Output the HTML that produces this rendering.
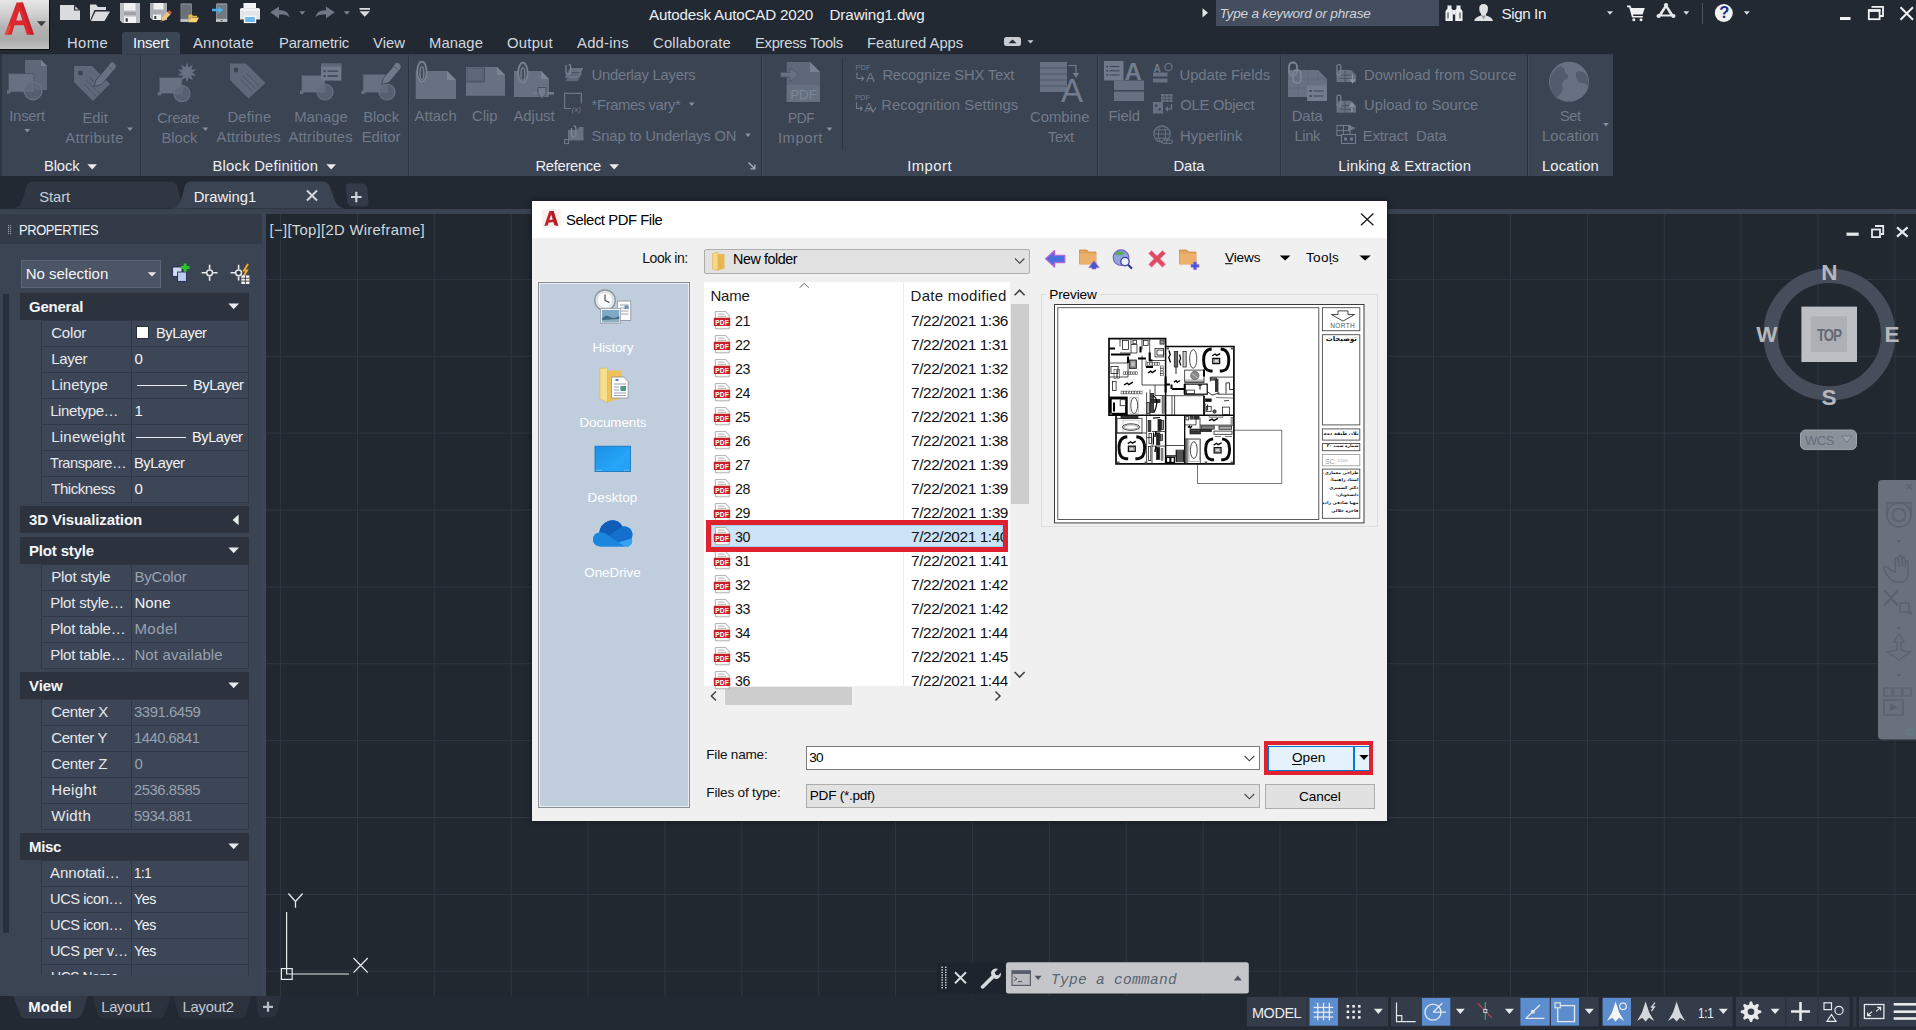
<!DOCTYPE html>
<html lang="en">
<head>
<meta charset="utf-8">
<title>Autodesk AutoCAD 2020 - Drawing1.dwg</title>
<style>
*{box-sizing:border-box;margin:0;padding:0}
html,body{width:1916px;height:1030px;overflow:hidden;background:#222933}
body{position:relative;font-family:"Liberation Sans","DejaVu Sans",sans-serif;font-size:15px;color:#e6e8eb;-webkit-font-smoothing:antialiased}
.abs{position:absolute}
.t{position:absolute;white-space:nowrap;line-height:1}
svg{position:absolute;overflow:visible}
/* ---------- title / menu ---------- */
#appbtn{left:0;top:0;width:50px;height:50px;background:linear-gradient(180deg,#e6e6e6 0%,#cfcfcf 30%,#b4b4b4 55%,#aaaaaa 80%,#c2c2c2 100%);border-right:1.6px solid #0c0e12;border-bottom:1.6px solid #0c0e12}
#title{left:649px;top:7px;font-size:15px;color:#e8eaed}
#search{left:1216px;top:0;width:223px;height:26px;background:#454e5f}
#search .t{left:5px;top:5px;font-style:italic;font-size:14px;color:#d5d9df}
.menu{top:35px;font-size:15.2px;color:#dfe3e8}
#tabInsert{left:122px;top:32px;width:58px;height:23px;background:#3b4453;border-radius:3px 3px 0 0}
/* ---------- ribbon ---------- */
#ribbon{left:0;top:54px;width:1613px;height:122px;background:#3b4453}
.sep{position:absolute;top:54px;width:2px;height:122px;background:#2c3440}
.rl{font-size:15.2px;color:#6d7787}
.rs{font-size:15.2px;color:#687283}
.pt{font-size:15.2px;color:#e8ebef;top:158px}
/* ---------- file tabs ---------- */
#filetabs{left:0;top:176px;width:1916px;height:36px;background:#222933}
/* ---------- props ---------- */
#props{left:0;top:212px;width:266px;height:784px;background:#3b4453}
#propsHead{left:0;top:214px;width:263px;height:30px;background:#323a47}
.sec{position:absolute;left:20px;width:229px;height:27px;background:#2a313c}
.sec .t{left:9px;top:6px;font-weight:bold;font-size:14.6px;color:#f2f4f6}
.sec i{position:absolute;right:9px;top:11px;border:5.5px solid transparent;border-top:6px solid #e6e8eb;border-bottom:0}
.sec i.l{top:8px;right:11px;border:5.5px solid transparent;border-right:6px solid #e6e8eb;border-left:0}
.row{position:absolute;left:42px;width:207px;height:26px;background:#3f4858;border-top:1px solid #333b48;border-left:1px solid #333b48}
.row b{position:absolute;left:89px;top:0;width:1px;height:25px;background:#333b48}
.row .k{left:8px;top:5px;font-size:15px;font-weight:normal;color:#e3e6ea}
.row .v{left:92px;top:5px;font-size:15px;color:#eef0f3}
.row .v.d{color:#97a0ae}
/* ---------- canvas ---------- */
#canvas{left:266px;top:214px;width:1650px;height:782px;background:#212830;overflow:hidden}
/* ---------- dialog ---------- */
#dlg{left:531px;top:200px;width:857px;height:622px;background:#f0f0f0;color:#000;border:1px solid #1b2029;box-shadow:0 0 6px rgba(0,0,0,.35)}
#dlgTitle{left:0;top:0;width:855px;height:37px;background:#fff}
.d{color:#111;font-size:14.6px}
.fr{position:absolute;left:0;width:300px;height:24px}
.fr .n{left:29px;top:5px;font-size:15px;color:#111}
.fr .dt{left:205px;top:5px;font-size:15px;color:#111}
/* ---------- bottom ---------- */
#bottom{left:0;top:996px;width:1916px;height:34px;background:#222933}
</style>
</head>
<body>
<!-- TITLEBAR -->
<div id="appbtn" class="abs"></div>
<div id="search" class="abs"></div>
<div class="t" style="left:649.0px;top:7px;font-size:15.2px;letter-spacing:-0.19px;color:#eceef1;">Autodesk AutoCAD 2020</div>
<div class="t" style="left:829.5px;top:7px;font-size:15.2px;letter-spacing:-0.10px;color:#eceef1;">Drawing1.dwg</div>
<div class="t" style="left:1501.5px;top:6px;font-size:15.2px;letter-spacing:-0.41px;color:#eef0f3;">Sign In</div>
<div class="t" style="left:1219.5px;top:7px;font-size:13.6px;letter-spacing:-0.21px;color:#cfd4dc;font-style:italic;">Type a keyword or phrase</div>
<svg style="left:0;top:0" width="51" height="51" viewBox="0 0 51 51">
 <path d="M4.7 34.8 L16.6 2.5 L22.9 2.5 L34.1 34.8 L26.9 34.8 L23.8 25.2 L14.6 25.2 L11.6 34.8 Z M16.2 20.6 L22.4 20.6 L19.3 10.8 Z" fill="#da2a2e" fill-rule="evenodd"/>
 <path d="M19.8 2.5 L22.9 2.5 L34.1 34.8 L30.4 34.8 Z" fill="#b51c22" opacity=".5"/>
 <path d="M4.7 34.8 L8.6 24.2 L11 27 L8 34.8 Z" fill="#e8553f" opacity=".7"/>
 <path d="M36.9 21.3 L46 21.3 L41.45 26.2 Z" fill="#3a3d42"/>
</svg>
<svg style="left:56px;top:0" width="320" height="28" viewBox="56 0 320 28">
 <!-- new -->
 <path d="M60 5 L74 5 L80 10.5 L80 20 L60 20 Z" fill="#d9dbde"/><path d="M74 5 L74 10.5 L80 10.5 Z" fill="#222933"/><path d="M75.2 6.6 L75.2 9.6 L78.6 9.6 Z" fill="#d9dbde"/>
 <!-- open -->
 <path d="M90 20.5 L90 4.5 L96 4.5 L98 7 L106 7 L106 10 L94.5 10 L90 20.5 Z" fill="#d9dbde"/><path d="M95.5 11.5 L110 11.5 L104.5 21 L90.8 21 Z" fill="#d9dbde"/>
 <!-- save -->
 <path d="M120 3 L140 3 L140 23 L122.5 23 L120 20.5 Z" fill="#b9bcc1"/><rect x="124" y="3" width="11.5" height="7.5" fill="#f0f1f2"/><rect x="124" y="16.5" width="12" height="6.5" fill="#f0f1f2"/><rect x="125.6" y="18.2" width="2.2" height="3.6" fill="#3a4049"/><rect x="124" y="12" width="12" height="3" fill="#9fa3a9"/>
 <!-- saveas -->
 <path d="M150 3 L167 3 L167 20 L152.5 20 L150 17.5 Z" fill="#a9adb3"/><rect x="153.5" y="3" width="10" height="6.5" fill="#eeeff0"/><rect x="153" y="14.5" width="8" height="5.5" fill="#eeeff0"/><rect x="154.3" y="16" width="2" height="3" fill="#3a4049"/>
 <path d="M160.5 21.8 L162 17.2 L167.5 11.8 L170.4 14.6 L165 20.2 Z" fill="#e8c87e"/><path d="M167.5 11.8 L168.6 10.8 Q169.6 10.2 170.6 11.2 L171.4 12 Q172 13 171.2 13.8 L170.4 14.6 Z" fill="#d9534a"/><path d="M160.5 21.8 L161.2 19.6 L162.8 21.1 Z" fill="#4a4034"/>
 <!-- open mobile -->
 <rect x="180.5" y="3.2" width="11.5" height="18.6" rx="1.2" fill="#7d828a"/><rect x="181.5" y="5" width="9.5" height="13.5" fill="#6b7078"/><rect x="180.5" y="19.3" width="11.5" height="2.5" fill="#c5c8cc"/>
 <path d="M188.5 22 L188.5 14.5 L192 14.5 L193 15.8 L197 15.8 L197 17.2 L191 17.2 Z" fill="#e9b84a"/><path d="M191.2 17.6 L199 17.6 L196.5 22.2 L188.7 22.2 Z" fill="#f6d26f"/>
 <!-- save mobile -->
 <rect x="216" y="3.2" width="11.3" height="18.6" rx="1.2" fill="#8b9098"/><rect x="217" y="5" width="9.3" height="13.5" fill="#727780"/><rect x="216" y="19.3" width="11.3" height="2.5" fill="#c5c8cc"/><rect x="220.6" y="20.2" width="2" height="0.9" fill="#444"/>
 <path d="M212 8.8 L218.5 8.8 L218.5 6.2 L223.2 10 L218.5 13.8 L218.5 11.2 L212 11.2 Z" fill="#49aee8"/>
 <!-- print -->
 <rect x="243.5" y="3" width="12.5" height="6" fill="#f3f4f5"/><path d="M241.5 8 L258.5 8 Q260 8 260 9.5 L260 19.5 L240 19.5 L240 9.5 Q240 8 241.5 8 Z" fill="#e3e5e7"/><rect x="243.8" y="15.5" width="12.4" height="7.6" fill="#f3f4f5"/><rect x="245.2" y="17" width="9.6" height="5" fill="#6db9ee"/><rect x="240" y="9.3" width="20" height="1.4" fill="#f7f7f8"/>
 <!-- undo -->
 <path d="M270.3 12.2 L279 6.6 L279 10.2 Q288 9.5 289.8 17.5 Q286.5 13.6 279 14.6 L279 18.4 Z" fill="#6f7783"/>
 <path d="M299.3 11.2 L305.3 11.2 L302.3 14.8 Z" fill="#7c8490"/>
 <!-- redo -->
 <path d="M334.7 12.2 L326 6.6 L326 10.2 Q317 9.5 315.2 17.5 Q318.5 13.6 326 14.6 L326 18.4 Z" fill="#6f7783"/>
 <path d="M343.8 11.2 L349.8 11.2 L346.8 14.8 Z" fill="#7c8490"/>
 <!-- customize -->
 <rect x="359.5" y="8" width="10.5" height="1.8" fill="#d9dbde"/><path d="M359.5 11.3 L370 11.3 L364.75 16.8 Z" fill="#d9dbde"/>
</svg>
<svg style="left:1200px;top:0" width="716" height="28" viewBox="1200 0 716 28">
 <path d="M1202.5 8.2 L1208 12.8 L1202.5 17.4 Z" fill="#e4e6e9"/>
 <!-- binoculars -->
 <path d="M1445.5 21 L1445.5 11 L1447.5 8.5 L1447.5 5.5 L1451.5 5.5 L1451.5 8.5 L1452.8 10 L1452.8 21 Z M1455.2 21 L1455.2 10 L1456.5 8.5 L1456.5 5.5 L1460.5 5.5 L1460.5 8.5 L1462.5 11 L1462.5 21 Z" fill="#eef0f2"/><rect x="1452.5" y="10" width="3" height="4.5" fill="#eef0f2"/><rect x="1447" y="12.5" width="2" height="6" fill="#8a8f97"/><rect x="1459" y="12.5" width="2" height="6" fill="#8a8f97"/>
 <!-- user -->
 <path d="M1479.2 8.5 Q1479.2 4 1483.6 4 Q1488 4 1488 8.5 Q1488 12 1486 14 L1486 15.5 Q1492.5 17 1493 21 L1474.2 21 Q1474.7 17 1481.2 15.5 L1481.2 14 Q1479.2 12 1479.2 8.5 Z" fill="#dfe1e4"/><path d="M1481.2 15.5 L1483.6 19.5 L1486 15.5 Z" fill="#9a9ea6"/>
 <path d="M1607 11.3 L1613 11.3 L1610 14.7 Z" fill="#d9dbde"/>
 <!-- cart -->
 <path d="M1627 5.6 L1630.4 5.6 L1631.4 8 L1644.8 8 L1642.6 14.6 L1633 14.6 L1633.4 16 L1642.8 16 L1642.8 17.6 L1632 17.6 L1629.2 7.2 L1627 7.2 Z" fill="#eef0f2"/><circle cx="1633.8" cy="19.8" r="1.5" fill="#eef0f2"/><circle cx="1641" cy="19.8" r="1.5" fill="#eef0f2"/>
 <!-- a360 -->
 <path d="M1666 3.6 L1674.6 16.6 L1657.4 16.6 Z M1666 8 L1662 14.4 L1670 14.4 Z" fill="#e6e8eb" fill-rule="evenodd"/><circle cx="1666" cy="5" r="2.1" fill="#e6e8eb"/><circle cx="1658.6" cy="16" r="2.1" fill="#e6e8eb"/><circle cx="1673.4" cy="16" r="2.1" fill="#e6e8eb"/>
 <path d="M1683.3 11.3 L1689.3 11.3 L1686.3 14.7 Z" fill="#d9dbde"/>
 <rect x="1702" y="3" width="1" height="21" fill="#4a5362"/>
 <!-- help -->
 <circle cx="1723.8" cy="13" r="9" fill="#f2f3f5"/>
 <path d="M1743.8 11.3 L1749.8 11.3 L1746.8 14.7 Z" fill="#d9dbde"/>
 <!-- window controls -->
 <rect x="1840" y="17" width="10.5" height="3" fill="#f0f1f3"/>
 <path d="M1871.5 6.8 L1883 6.8 L1883 16 L1880 16" fill="none" stroke="#f0f1f3" stroke-width="1.8"/><rect x="1868.8" y="10.2" width="10.8" height="9" fill="none" stroke="#f0f1f3" stroke-width="1.8"/><rect x="1868" y="9.3" width="12.4" height="2.6" fill="#f0f1f3"/>
 <path d="M1900.5 7.2 L1913 19.8 M1913 7.2 L1900.5 19.8" stroke="#f0f1f3" stroke-width="2" fill="none"/>
</svg>
<div class="t" style="left:1719.3px;top:3.6px;font-size:16.5px;font-weight:bold;color:#1b2f8f">?</div>

<!-- MENU -->
<div id="tabInsert" class="abs"></div>
<div class="t" style="left:67.0px;top:36px;font-size:14.8px;letter-spacing:0.38px;color:#d3d7dd;">Home</div>
<div class="t" style="left:133.0px;top:36px;font-size:14.8px;letter-spacing:-0.17px;color:#f2f4f7;">Insert</div>
<div class="t" style="left:193.0px;top:36px;font-size:14.8px;letter-spacing:0.22px;color:#d3d7dd;">Annotate</div>
<div class="t" style="left:279.0px;top:36px;font-size:14.8px;letter-spacing:-0.15px;color:#d3d7dd;">Parametric</div>
<div class="t" style="left:373.0px;top:36px;font-size:14.8px;letter-spacing:0.05px;color:#d3d7dd;">View</div>
<div class="t" style="left:429.0px;top:36px;font-size:14.8px;letter-spacing:0.09px;color:#d3d7dd;">Manage</div>
<div class="t" style="left:507.0px;top:36px;font-size:14.8px;letter-spacing:0.26px;color:#d3d7dd;">Output</div>
<div class="t" style="left:577.0px;top:36px;font-size:14.8px;letter-spacing:0.26px;color:#d3d7dd;">Add-ins</div>
<div class="t" style="left:653.0px;top:36px;font-size:14.8px;letter-spacing:0.21px;color:#d3d7dd;">Collaborate</div>
<div class="t" style="left:755.0px;top:36px;font-size:14.8px;letter-spacing:-0.30px;color:#d3d7dd;">Express Tools</div>
<div class="t" style="left:867.0px;top:36px;font-size:14.8px;color:#d3d7dd;">Featured Apps</div>
<svg style="left:1004px;top:37px" width="30" height="10" viewBox="0 0 30 10"><rect x="0" y="0" width="17" height="9" rx="2.5" fill="#c9cdd3"/><path d="M4.5 6.3 L8.5 2.6 L12.5 6.3 Z" fill="#222933"/><path d="M23.5 3.2 L29.5 3.2 L26.5 6.4 Z" fill="#c9cdd3"/></svg>

<!-- RIBBON -->
<div id="ribbon" class="abs"></div>
<div class="t" style="left:9.2px;top:109px;font-size:14.8px;letter-spacing:-0.20px;color:#717a89;">Insert</div>
<div class="t" style="left:82.4px;top:111px;font-size:14.8px;color:#717a89;">Edit</div>
<div class="t" style="left:65.3px;top:131px;font-size:14.8px;letter-spacing:0.37px;color:#717a89;">Attribute</div>
<div class="t" style="left:157.3px;top:111px;font-size:14.8px;letter-spacing:-0.39px;color:#717a89;">Create</div>
<div class="t" style="left:161.6px;top:131px;font-size:14.8px;letter-spacing:-0.10px;color:#717a89;">Block</div>
<div class="t" style="left:227.5px;top:110px;font-size:14.8px;letter-spacing:0.17px;color:#717a89;">Define</div>
<div class="t" style="left:216.6px;top:130px;font-size:14.8px;letter-spacing:0.17px;color:#717a89;">Attributes</div>
<div class="t" style="left:294.2px;top:110px;font-size:14.8px;color:#717a89;">Manage</div>
<div class="t" style="left:288.5px;top:130px;font-size:14.8px;letter-spacing:0.17px;color:#717a89;">Attributes</div>
<div class="t" style="left:363.2px;top:110px;font-size:14.8px;letter-spacing:-0.08px;color:#717a89;">Block</div>
<div class="t" style="left:361.7px;top:130px;font-size:14.8px;letter-spacing:0.04px;color:#717a89;">Editor</div>
<div class="t" style="left:414.6px;top:109px;font-size:14.8px;letter-spacing:0.04px;color:#717a89;">Attach</div>
<div class="t" style="left:472.0px;top:109px;font-size:14.8px;color:#717a89;">Clip</div>
<div class="t" style="left:513.5px;top:109px;font-size:14.8px;color:#717a89;">Adjust</div>
<div class="t" style="left:787.8px;top:111px;font-size:14.8px;letter-spacing:-0.45px;transform:scaleX(0.9271);transform-origin:0 0;color:#717a89;">PDF</div>
<div class="t" style="left:778.0px;top:131px;font-size:14.8px;letter-spacing:0.51px;color:#717a89;">Import</div>
<div class="t" style="left:1030.0px;top:110px;font-size:14.8px;letter-spacing:0.04px;color:#717a89;">Combine</div>
<div class="t" style="left:1047.8px;top:130px;font-size:14.8px;letter-spacing:-0.24px;color:#717a89;">Text</div>
<div class="t" style="left:1108.4px;top:109px;font-size:14.8px;letter-spacing:-0.14px;color:#717a89;">Field</div>
<div class="t" style="left:1291.8px;top:109px;font-size:14.8px;letter-spacing:-0.12px;color:#717a89;">Data</div>
<div class="t" style="left:1294.4px;top:129px;font-size:14.8px;letter-spacing:-0.39px;color:#717a89;">Link</div>
<div class="t" style="left:1560.0px;top:109px;font-size:14.8px;letter-spacing:-0.45px;transform:scaleX(0.9871);transform-origin:0 0;color:#717a89;">Set</div>
<div class="t" style="left:1542.0px;top:129px;font-size:14.8px;letter-spacing:0.13px;color:#717a89;">Location</div>
<div class="t" style="left:591.6px;top:68px;font-size:14.8px;letter-spacing:-0.26px;color:#717a89;white-space:pre;">Underlay Layers</div>
<div class="t" style="left:591.6px;top:98px;font-size:14.8px;letter-spacing:-0.38px;color:#717a89;white-space:pre;">*Frames vary*</div>
<div class="t" style="left:591.6px;top:129px;font-size:14.8px;letter-spacing:-0.17px;color:#717a89;white-space:pre;">Snap to Underlays ON</div>
<div class="t" style="left:882.4px;top:68px;font-size:14.8px;letter-spacing:-0.21px;color:#717a89;white-space:pre;">Recognize SHX Text</div>
<div class="t" style="left:881.3px;top:98px;font-size:14.8px;letter-spacing:0.06px;color:#717a89;white-space:pre;">Recognition Settings</div>
<div class="t" style="left:1179.5px;top:68px;font-size:14.8px;letter-spacing:-0.06px;color:#717a89;white-space:pre;">Update Fields</div>
<div class="t" style="left:1180.3px;top:98px;font-size:14.8px;letter-spacing:-0.25px;color:#717a89;white-space:pre;">OLE Object</div>
<div class="t" style="left:1180.0px;top:129px;font-size:14.8px;letter-spacing:0.08px;color:#717a89;white-space:pre;">Hyperlink</div>
<div class="t" style="left:1364.0px;top:68px;font-size:14.8px;letter-spacing:0.10px;color:#717a89;white-space:pre;">Download from Source</div>
<div class="t" style="left:1364.0px;top:98px;font-size:14.8px;color:#717a89;white-space:pre;">Upload to Source</div>
<div class="t" style="left:1362.8px;top:129px;font-size:14.8px;letter-spacing:-0.13px;color:#717a89;white-space:pre;">Extract  Data</div>
<div class="t" style="left:43.9px;top:159px;font-size:14.8px;letter-spacing:-0.10px;color:#eef0f3;">Block</div>
<div class="t" style="left:212.5px;top:159px;font-size:14.8px;letter-spacing:0.23px;color:#eef0f3;">Block Definition</div>
<div class="t" style="left:535.5px;top:159px;font-size:14.8px;letter-spacing:-0.33px;color:#eef0f3;">Reference</div>
<div class="t" style="left:907.2px;top:159px;font-size:14.8px;letter-spacing:0.48px;color:#eef0f3;">Import</div>
<div class="t" style="left:1173.5px;top:159px;font-size:14.8px;letter-spacing:-0.07px;color:#eef0f3;">Data</div>
<div class="t" style="left:1338.2px;top:159px;font-size:14.8px;letter-spacing:0.10px;color:#eef0f3;">Linking &amp; Extraction</div>
<div class="t" style="left:1542.0px;top:159px;font-size:14.8px;letter-spacing:0.13px;color:#eef0f3;">Location</div><div class="abs" style="left:140px;top:54px;width:1px;height:122px;background:#2b323d"></div><div class="abs" style="left:141px;top:54px;width:1px;height:122px;background:#424b5b"></div><div class="abs" style="left:408px;top:54px;width:1px;height:122px;background:#2b323d"></div><div class="abs" style="left:409px;top:54px;width:1px;height:122px;background:#424b5b"></div><div class="abs" style="left:761px;top:54px;width:1px;height:122px;background:#2b323d"></div><div class="abs" style="left:762px;top:54px;width:1px;height:122px;background:#424b5b"></div><div class="abs" style="left:1097px;top:54px;width:1px;height:122px;background:#2b323d"></div><div class="abs" style="left:1098px;top:54px;width:1px;height:122px;background:#424b5b"></div><div class="abs" style="left:1280px;top:54px;width:1px;height:122px;background:#2b323d"></div><div class="abs" style="left:1281px;top:54px;width:1px;height:122px;background:#424b5b"></div><div class="abs" style="left:1527px;top:54px;width:1px;height:122px;background:#2b323d"></div><div class="abs" style="left:1528px;top:54px;width:1px;height:122px;background:#424b5b"></div><div class="abs" style="left:842px;top:58px;width:1px;height:92px;background:#2d3440"></div><div class="abs" style="left:0;top:54px;width:1613px;height:1px;background:#363e4c"></div><div class="abs" style="left:0;top:54px;width:2px;height:122px;background:#2e3543"></div><svg style="left:0;top:54px" width="1613" height="122" viewBox="0 54 1613 122"><path d="M87.4 164.2 L97.0 164.2 L92.2 169.6 Z" fill="#e9ebee"/><path d="M326.4 164.2 L336.0 164.2 L331.2 169.6 Z" fill="#e9ebee"/><path d="M609.4000000000001 164.2 L619.0 164.2 L614.2 169.6 Z" fill="#e9ebee"/><path d="M24.4 129 L30.0 129 L27.2 132.4 Z" fill="#8790a0"/><path d="M127.2 127.5 L132.8 127.5 L130 130.9 Z" fill="#8790a0"/><path d="M202.6 127.5 L208.20000000000002 127.5 L205.4 130.9 Z" fill="#8790a0"/><path d="M826.7 127.5 L832.3 127.5 L829.5 130.9 Z" fill="#8790a0"/><path d="M689.0 102.6 L694.5999999999999 102.6 L691.8 106.0 Z" fill="#8790a0"/><path d="M745.2 133.6 L750.8 133.6 L748 137.0 Z" fill="#8790a0"/><path d="M1603.2 123 L1608.8 123 L1606 126.4 Z" fill="#8790a0"/><path d="M748.5 162.5 L754.5 168.5 M750.5 168.8 L754.8 168.8 L754.8 164.5" stroke="#aab1bd" stroke-width="1.3" fill="none"/><path d="M25 60 L41 60 L47 66 L47 90 L25 90 Z" fill="#5f6878"/><path d="M41 60 L41 66 L47 66 Z" fill="#78818f"/><rect x="8.5" y="73.7" width="25.5" height="18.3" fill="#687181" stroke="#4a5363" stroke-width="0.8"/><circle cx="33" cy="90.8" r="9" fill="#5f6878" fill-opacity=".75" stroke="#687181" stroke-width="1.2"/><path d="M33 81.8 L33 90.8 L24 90.8" stroke="#687181" stroke-width="1" fill="none"/><rect x="7" y="90.2" width="3.4" height="3.4" fill="#687181"/><path d="M74 66 L92 66 L110 84 L93 101 L74 82 Z" fill="#5f6878"/><circle cx="80.5" cy="73" r="2.4" fill="#3b4453"/><path d="M86 80 L100 94 M83.5 83.5 L96.5 96.5 M89 77 L94 82" stroke="#4a5363" stroke-width="0.9"/><path d="M96 80 L108 66 L113.5 70.5 L101.5 84.5 L94 86.5 Z" fill="#687181" stroke="#3b4453" stroke-width="0.8"/><path d="M108 66 L110.5 63 Q112.5 61.5 114.5 63.5 Q116.5 65.5 115.5 67.5 L113.5 70.5 Z" fill="#687181"/><rect x="159.4" y="77.5" width="22.6" height="16.1" fill="#687181" stroke="#4a5363" stroke-width="0.8"/><circle cx="182" cy="93.6" r="8" fill="#5f6878" fill-opacity=".8" stroke="#687181" stroke-width="1.2"/><path d="M182 85.6 L182 93.6 L174 93.6" stroke="#687181" stroke-width="1" fill="none"/><rect x="157.8" y="92" width="3.4" height="3.4" fill="#687181"/><polygon points="187.0,62.5 188.6,67.6 192.9,64.4 191.2,69.4 196.5,69.4 192.2,72.5 196.5,75.6 191.2,75.6 192.9,80.6 188.6,77.4 187.0,82.5 185.4,77.4 181.1,80.6 182.8,75.6 177.5,75.6 181.8,72.5 177.5,69.4 182.8,69.4 181.1,64.4 185.4,67.6" fill="#687181"/><path d="M230 63.6 L246 63.6 L265.5 83 L248.5 98.5 L230 80 Z" fill="#5f6878"/><circle cx="236" cy="70" r="2.4" fill="#3b4453"/><path d="M243 76 L256 89 M240.5 79.5 L252.5 91.5 M246 73 L259 86" stroke="#4a5363" stroke-width="0.9"/><rect x="301.7" y="75.4" width="23.3" height="17" fill="#687181" stroke="#4a5363" stroke-width="0.8"/><circle cx="325" cy="92" r="8" fill="#5f6878" fill-opacity=".8" stroke="#687181" stroke-width="1.2"/><path d="M325 84 L325 92 L317 92" stroke="#687181" stroke-width="1" fill="none"/><rect x="300" y="90.6" width="3.4" height="3.4" fill="#687181"/><rect x="321" y="63.6" width="20.4" height="17" fill="#707a8a"/><rect x="321" y="63.6" width="20.4" height="3" fill="#5f6878"/><path d="M327.5 71.2 L338 71.2 M327.5 76 L338 76" stroke="#3b4453" stroke-width="1.3"/><rect x="323.6" y="70.2" width="2" height="2" fill="#3b4453"/><rect x="323.6" y="75" width="2" height="2" fill="#3b4453"/><rect x="363" y="74.3" width="24" height="18.2" fill="#687181" stroke="#4a5363" stroke-width="0.8"/><circle cx="387" cy="92" r="8" fill="#5f6878" fill-opacity=".8" stroke="#687181" stroke-width="1.2"/><path d="M387 84 L387 92 L379 92" stroke="#687181" stroke-width="1" fill="none"/><rect x="361.4" y="90.6" width="3.4" height="3.4" fill="#687181"/><path d="M383.5 78 L393.5 66 L399 70.5 L389 82.5 L381.5 84.5 Z" fill="#6f7989" stroke="#3b4453" stroke-width="0.8"/><path d="M393.5 66 L395.5 63.5 Q397.5 62 399.5 64 Q401.5 66 400.5 68 L399 70.5 Z" fill="#6f7989"/><path d="M415.7 71 L447 71 L456 80 L456 99 L415.7 99 Z" fill="#687181"/><path d="M447 71 L447 80 L456 80 Z" fill="#7b8492"/><ellipse cx="421.9" cy="71.6" rx="4.7" ry="10" fill="#444d5c" stroke="#7a8392" stroke-width="1.7"/><ellipse cx="421.9" cy="73.19999999999999" rx="1.9" ry="6.4" fill="none" stroke="#7a8392" stroke-width="1.3"/><path d="M466 67 L497 67 L505 75 L505 95.7 L466 95.7 Z" fill="#687181"/><path d="M497 67 L497 75 L505 75 Z" fill="#7b8492"/><rect x="467" y="68" width="16" height="13" fill="#5f6878" stroke="#4a5363" stroke-width="0.8"/><path d="M465 82 L484.5 82 L484.5 66" stroke="#4a5363" stroke-width="1" fill="none"/><path d="M514 71 L541 71 L549 79 L549 97 L514 97 Z" fill="#687181"/><path d="M541 71 L541 79 L549 79 Z" fill="#7b8492"/><ellipse cx="522.9" cy="72.6" rx="4.7" ry="10" fill="#444d5c" stroke="#7a8392" stroke-width="1.7"/><ellipse cx="522.9" cy="74.19999999999999" rx="1.9" ry="6.4" fill="none" stroke="#7a8392" stroke-width="1.3"/><rect x="533" y="92" width="21" height="2.6" fill="#727c8c"/><path d="M538 87.5 L546 87.5 L546 94 L542 98.5 L538 94 Z" fill="#727c8c" stroke="#3b4453" stroke-width="0.7"/><path d="M570 68 L582.6 68 L578 77 L565 77 Z" fill="#687181"/><path d="M570 72.5 L582.6 72.5 L578 81.5 L565 81.5 Z" fill="#5f6878" stroke="#3b4453" stroke-width="0.6"/><path d="M565 77 L578 77 L582.6 68" stroke="#7a8494" stroke-width="0.9" fill="none"/><path d="M566 65 L566 72 Q566 74.5 568.3 74.5 Q570.6 74.5 570.6 72 L570.6 66.5 Q570.6 64.5 568.8 64.5" stroke="#7a8494" stroke-width="1.3" fill="none"/><path d="M571 108.5 L564.6 108.5 L564.6 93.4 L581.4 93.4 L581.4 103.5" stroke="#6d7787" stroke-width="1.2" fill="none"/><path d="M568 130 L583.5 130 L583.5 140.5 L568 140.5 Z" fill="#687181"/><path d="M577 130 L583.5 130 L583.5 127 L579.5 127 Z" fill="#687181"/><rect x="564.6" y="139.6" width="4" height="4" fill="#3b4453" stroke="#727c8c" stroke-width="1"/><path d="M571.5 128 L571.5 134.5 Q571.5 137 573.7 137 Q575.9 137 575.9 134.5 L575.9 128.5 Q575.9 126 573.9 126" stroke="#7a8494" stroke-width="1.3" fill="none"/><path d="M786.7 62 L810 62 L820 72 L820 102 L786.7 102 Z" fill="#5f6878"/><path d="M810 62 L810 72 L820 72 Z" fill="#78818f"/><rect x="786.7" y="85" width="33.3" height="17" fill="#66707f"/><path d="M780.5 72.5 L790 72.5 L790 68 L799 74.8 L790 81.5 L790 77 L780.5 77 Z" fill="#687181" stroke="#4a5363" stroke-width="0.7"/><rect x="1040" y="62" width="27" height="30" fill="#687181"/><path d="M1040 68 L1067 68 M1040 74 L1067 74 M1040 80 L1067 80 M1040 86 L1067 86" stroke="#4a5363" stroke-width="0.8"/><path d="M1068.5 65.5 L1076 65.5 L1076 73" stroke="#727c8c" stroke-width="1.2" fill="none"/><path d="M1072.8 73 L1079.2 73 L1076 78 Z" fill="#727c8c"/><rect x="1104" y="61" width="19.5" height="19.5" fill="#707a8a"/><path d="M1109.5 66.5 L1119.5 66.5 M1109.5 70.8 L1119.5 70.8 M1109.5 75 L1119.5 75" stroke="#3b4453" stroke-width="1"/><rect x="1106.4" y="65.8" width="1.6" height="1.6" fill="#3b4453"/><rect x="1106.4" y="70" width="1.6" height="1.6" fill="#3b4453"/><rect x="1106.4" y="74.2" width="1.6" height="1.6" fill="#3b4453"/><rect x="1114" y="80.5" width="30" height="9.5" fill="#687181"/><rect x="1114" y="91.5" width="30" height="9.5" fill="#687181"/><rect x="1153" y="72.5" width="14.5" height="4" fill="#687181"/><rect x="1153" y="78.5" width="14.5" height="4" fill="#687181"/><circle cx="1168.5" cy="67" r="3.6" fill="none" stroke="#687181" stroke-width="1.3"/><rect x="1161" y="94" width="11.5" height="8" fill="#687181"/><path d="M1161 96.7 L1172.5 96.7 M1161 99.4 L1172.5 99.4 M1165 94 L1165 102 M1169 94 L1169 102" stroke="#3b4453" stroke-width="0.6"/><rect x="1153" y="102" width="10" height="11.5" fill="#687181"/><rect x="1155" y="104.5" width="2.2" height="2.2" fill="#3b4453"/><rect x="1158.6" y="108.2" width="2.2" height="2.2" fill="#3b4453"/><path d="M1171.5 104 L1171.5 109 L1166 109 M1168 107 L1166 109 L1168 111" stroke="#727c8c" stroke-width="1.1" fill="none"/><circle cx="1162" cy="134" r="8.2" fill="none" stroke="#687181" stroke-width="1.2"/><ellipse cx="1162" cy="134" rx="3.6" ry="8.2" fill="none" stroke="#687181" stroke-width="1"/><path d="M1153.8 134 L1170.2 134 M1155 129.8 L1169 129.8 M1155 138.2 L1169 138.2" stroke="#687181" stroke-width="1"/><rect x="1162" y="140" width="6" height="3.4" rx="1.7" fill="#3b4453" stroke="#727c8c" stroke-width="1"/><rect x="1166.5" y="140" width="6" height="3.4" rx="1.7" fill="#3b4453" stroke="#727c8c" stroke-width="1"/><path d="M1288 70 L1318 70 L1327 79 L1327 97 L1288 97 Z" fill="#687181"/><path d="M1288 79 L1327 79 M1288 88 L1308 88 M1298 70 L1298 97 M1308 70 L1308 97 M1318 70 L1318 80" stroke="#5f6878" stroke-width="0.8"/><rect x="1307" y="85.5" width="20" height="15.5" fill="#737d8d"/><path d="M1313.5 91 L1323.5 91 M1313.5 96 L1323.5 96" stroke="#3b4453" stroke-width="1.2"/><rect x="1309.6" y="90" width="2" height="2" fill="#3b4453"/><rect x="1309.6" y="95" width="2" height="2" fill="#3b4453"/><rect x="1289" y="62.5" width="8" height="13" rx="4" fill="none" stroke="#7a8494" stroke-width="1.8"/><rect x="1293" y="70" width="8" height="13" rx="4" fill="none" stroke="#7a8494" stroke-width="1.8"/><path d="M1339 70 L1351 70 L1356 75 L1356 82 L1336.5 82 L1336.5 73 Z" fill="#687181"/><path d="M1340 75 L1354 75 M1340 78.5 L1354 78.5 M1345 71 L1345 82" stroke="#3b4453" stroke-width="0.6"/><rect x="1337" y="64.5" width="3.8" height="11" rx="1.9" fill="none" stroke="#7a8494" stroke-width="1.2"/><path d="M1339 100.7 L1351 100.7 L1356 105.7 L1356 112.7 L1336.5 112.7 L1336.5 103.7 Z" fill="#687181"/><path d="M1340 105.7 L1354 105.7 M1340 109.2 L1354 109.2 M1345 101.7 L1345 112.7" stroke="#3b4453" stroke-width="0.6"/><rect x="1337" y="95.2" width="3.8" height="11" rx="1.9" fill="none" stroke="#7a8494" stroke-width="1.2"/><path d="M1352.5 74 L1352.5 81 M1350 79 L1352.5 82.5 L1355 79" stroke="#8a93a2" stroke-width="1.4" fill="none"/><path d="M1352 112 L1352 104.5 M1349.5 107 L1352 103.5 L1354.5 107" stroke="#8a93a2" stroke-width="1.4" fill="none"/><rect x="1337" y="125.5" width="13" height="10" fill="none" stroke="#727c8c" stroke-width="1.1"/><path d="M1337 130.5 L1350 130.5 M1343.5 125.5 L1343.5 135.5" stroke="#727c8c" stroke-width="1"/><path d="M1348 125 L1355.5 128 L1348 131.5 Z" fill="#727c8c"/><rect x="1341.5" y="134.5" width="14" height="9" fill="#3b4453" stroke="#727c8c" stroke-width="1.1"/><circle cx="1345.5" cy="139" r="1.7" fill="#727c8c"/><circle cx="1351.5" cy="139" r="1.7" fill="#727c8c"/><circle cx="1569" cy="81.8" r="20" fill="#687181"/><path d="M1560 66 Q1566 68 1565 73 Q1570 75 1567 79 Q1562 80 1562 85 Q1564 90 1560 94 Q1556 98 1558 100 Q1551 94 1550 84 Q1549 72 1560 66 Z M1576 72 Q1582 70 1586 74 Q1589 80 1588 86 Q1584 82 1580 83 Q1575 80 1576 72 Z" fill="#525c6c"/></svg><div class="t" style="left:790.2px;top:88px;font-size:13.6px;letter-spacing:-0.20px;color:#7c8696;">PDF</div>
<div class="t" style="left:1061.0px;top:74px;font-size:33px;color:#727c8c;">A</div>
<div class="t" style="left:1124.5px;top:60px;font-size:24px;color:#727c8c;font-weight:bold;">A</div>
<div class="t" style="left:1153.5px;top:64px;font-size:10px;color:#727c8c;font-weight:bold;">A</div>
<div class="t" style="left:855.5px;top:64px;font-size:7.5px;color:#727c8c;">PDF</div>
<div class="t" style="left:866.0px;top:71px;font-size:13px;color:#727c8c;">A</div>
<div class="t" style="left:855.0px;top:94px;font-size:7.5px;color:#727c8c;">PDF</div>
<div class="t" style="left:864.5px;top:101px;font-size:13px;color:#727c8c;">A</div>
<div class="t" style="left:571.5px;top:106px;font-size:8px;color:#727c8c;font-style:italic;">(x)</div><svg style="left:850px;top:54px" width="30" height="70" viewBox="850 54 30 70"><path d="M857 72.5 L857 78.5 L863.5 78.5 M861.5 76.3 L863.7 78.5 L861.5 80.7" stroke="#727c8c" stroke-width="1.1" fill="none"/><path d="M856.5 102.5 L856.5 108.5 L862 108.5 M860 106.3 L862.2 108.5 L860 110.7" stroke="#727c8c" stroke-width="1.1" fill="none"/><path d="M868 111.5 L871 108 L873 112 L876 107.5" stroke="#727c8c" stroke-width="1.1" fill="none"/></svg>
<!-- FILE TABS -->
<div id="filetabs" class="abs"></div>
<svg style="left:0;top:176px" width="400" height="38" viewBox="0 176 400 38">

<path d="M14 208.5 Q21 207 23.5 197 L26 187 Q27.5 181.5 33 181.5 L170 181.5 Q176 181.5 177.5 187 L180 198 Q182 207 188 208.5 Z" fill="#2f3743"/>
<path d="M172 208.5 Q180 207 182 197 L184.5 187 Q186 181.5 192 181.5 L322 181.5 Q328 181.5 330 187 L334 198 Q336.5 207 344 208.5 Z" fill="#3b4453"/>
<path d="M346 186 Q346 183.5 349 183.5 L362 183.5 Q366.5 184 367.5 189 L368.5 203 Q368.5 206.5 365 206.5 L352 206.5 Q348 206 347 201 Z" fill="#333b48"/>
<path d="M307 190.5 L317 200.5 M317 190.5 L307 200.5" stroke="#d3d7dc" stroke-width="2" fill="none"/>
<path d="M351 197 L361.6 197 M356.3 191.7 L356.3 202.3" stroke="#cfd3d9" stroke-width="2.2" fill="none"/>
</svg>
<div class="abs" style="left:0;top:209px;width:1916px;height:5px;background:#39424f"></div>
<div class="t" style="left:39.2px;top:190px;font-size:14.8px;letter-spacing:-0.05px;color:#c9ced5;">Start</div>
<div class="t" style="left:193.7px;top:190px;font-size:14.8px;color:#f0f2f4;">Drawing1</div>
<!-- CANVAS -->
<div id="canvas" class="abs"></div>
<svg style="left:266px;top:214px" width="1650" height="782" viewBox="266 214 1650 782"><rect x="280.1" y="214" width="1" height="782" fill="#2f3843"/><rect x="357.0" y="214" width="1" height="782" fill="#2f3843"/><rect x="433.8" y="214" width="1" height="782" fill="#2f3843"/><rect x="510.7" y="214" width="1" height="782" fill="#2f3843"/><rect x="587.6" y="214" width="1" height="782" fill="#2f3843"/><rect x="664.5" y="214" width="1" height="782" fill="#2f3843"/><rect x="741.3" y="214" width="1" height="782" fill="#2f3843"/><rect x="818.2" y="214" width="1" height="782" fill="#2f3843"/><rect x="895.1" y="214" width="1" height="782" fill="#2f3843"/><rect x="971.9" y="214" width="1" height="782" fill="#2f3843"/><rect x="1048.8" y="214" width="1" height="782" fill="#2f3843"/><rect x="1125.7" y="214" width="1" height="782" fill="#2f3843"/><rect x="1202.5" y="214" width="1" height="782" fill="#2f3843"/><rect x="1279.4" y="214" width="1" height="782" fill="#2f3843"/><rect x="1356.3" y="214" width="1" height="782" fill="#2f3843"/><rect x="1433.1" y="214" width="1" height="782" fill="#2f3843"/><rect x="1510.0" y="214" width="1" height="782" fill="#2f3843"/><rect x="1586.9" y="214" width="1" height="782" fill="#2f3843"/><rect x="1663.8" y="214" width="1" height="782" fill="#2f3843"/><rect x="1740.6" y="214" width="1" height="782" fill="#2f3843"/><rect x="1817.5" y="214" width="1" height="782" fill="#2f3843"/><rect x="1894.4" y="214" width="1" height="782" fill="#2f3843"/><rect x="266" y="278.9" width="1650" height="1" fill="#2f3843"/><rect x="266" y="355.8" width="1650" height="1" fill="#2f3843"/><rect x="266" y="432.6" width="1650" height="1" fill="#2f3843"/><rect x="266" y="509.5" width="1650" height="1" fill="#2f3843"/><rect x="266" y="586.4" width="1650" height="1" fill="#2f3843"/><rect x="266" y="663.2" width="1650" height="1" fill="#2f3843"/><rect x="266" y="740.1" width="1650" height="1" fill="#2f3843"/><rect x="266" y="817.0" width="1650" height="1" fill="#2f3843"/><rect x="266" y="893.9" width="1650" height="1" fill="#2f3843"/><rect x="266" y="970.7" width="1650" height="1" fill="#2f3843"/><path d="M286.6 912 L286.6 974 L349 974" stroke="#e8eaec" stroke-width="1.2" fill="none"/><rect x="281.4" y="968.6" width="10.8" height="10.8" fill="none" stroke="#e8eaec" stroke-width="1.2"/><path d="M288.4 893.5 L295.5 901.5 L302.6 893.5 M295.5 901.5 L295.5 907.8" stroke="#e8eaec" stroke-width="1.3" fill="none"/><path d="M353.5 958 L367.8 972.6 M367.8 958 L353.5 972.6" stroke="#e8eaec" stroke-width="1.3" fill="none"/><circle cx="1829.4" cy="334.6" r="58.8" fill="none" stroke="#474e5b" stroke-width="14.4"/><rect x="1801.4" y="306.6" width="55.6" height="55.4" fill="#bcbfc3"/><rect x="1810.8" y="316.4" width="36.2" height="35.6" fill="#adb0b5"/><rect x="1800.5" y="430" width="56" height="19.6" rx="5" fill="#8b919a" stroke="#a0a5ad" stroke-width="1"/><path d="M1841.5 436 L1852 436 L1846.7 442.5 Z" fill="#9ba0a9" stroke="#727882" stroke-width="1"/><rect x="1846.5" y="232.6" width="12.2" height="3.2" fill="#e6e8ea"/><path d="M1875 226 L1883.2 226 L1883.2 234 L1881 234" fill="none" stroke="#e6e8ea" stroke-width="1.8"/><rect x="1872" y="229.5" width="8" height="7.6" fill="none" stroke="#e6e8ea" stroke-width="1.8"/><path d="M1897 227.3 L1907.6 236.6 M1907.6 227.3 L1897 236.6" stroke="#e6e8ea" stroke-width="2.2" fill="none"/><rect x="1878" y="480" width="42" height="259.5" rx="4" fill="#69717c"/><circle cx="1899" cy="515" r="12" fill="none" stroke="#5a626d" stroke-width="1.6"/><circle cx="1899" cy="515" r="6.5" fill="none" stroke="#5a626d" stroke-width="1.6"/><path d="M1887 515 L1887 503 L1911 503 L1911 515" fill="none" stroke="#5a626d" stroke-width="1.3"/><path d="M1890 570 Q1886 565 1884 567 Q1883 569 1888 576 Q1892 582 1897 582 L1903 582 Q1908 580 1908 572 L1908 562 Q1907 560 1905.5 562 L1905.5 568 L1905 558 Q1904 556 1902.5 558 L1902.5 567 L1901.5 556 Q1900.5 554 1899 556 L1899 567 L1897.5 558.5 Q1896.5 557 1895 558.5 L1895.5 572 Z" fill="none" stroke="#5a626d" stroke-width="1.4"/><path d="M1884 590 L1898 606 M1898 590 L1884 606" stroke="#5a626d" stroke-width="2"/><rect x="1900" y="603" width="9" height="9" fill="none" stroke="#5a626d" stroke-width="1.5"/><rect x="1908" y="611" width="3.5" height="3.5" fill="#5a626d"/><path d="M1899 634 L1904 642 L1901 642 L1901 650 L1910 652 L1899 660 L1887 652 L1897 650 L1897 642 L1894 642 Z" fill="none" stroke="#5a626d" stroke-width="1.4"/><rect x="1884" y="688" width="8" height="8" fill="none" stroke="#5a626d" stroke-width="1.2"/><rect x="1893.5" y="688" width="8" height="8" fill="none" stroke="#5a626d" stroke-width="1.2"/><rect x="1903" y="688" width="8" height="8" fill="none" stroke="#5a626d" stroke-width="1.2"/><rect x="1884" y="700" width="19" height="15" fill="none" stroke="#5a626d" stroke-width="1.4"/><path d="M1890 703.5 L1898 707.5 L1890 711.5 Z" fill="#5a626d"/><path d="M1896.5 540 L1901.5 540 L1899 543 Z" fill="#5a626d"/><path d="M1896.5 627 L1901.5 627 L1899 630 Z" fill="#5a626d"/><path d="M1896.5 674 L1901.5 674 L1899 677 Z" fill="#5a626d"/><path d="M1907 484 L1912 489 M1912 484 L1907 489" stroke="#5a626d" stroke-width="1.2"/><circle cx="1910" cy="732" r="3" fill="none" stroke="#5f7f8c" stroke-width="1.2"/><rect x="937" y="962.4" width="68" height="31.4" fill="#1e242d"/><rect x="941.4" y="966.60" width="1.5" height="1.4" fill="#cfd2d7"/><rect x="945" y="966.60" width="1.5" height="1.4" fill="#cfd2d7"/><rect x="941.4" y="969.15" width="1.5" height="1.4" fill="#cfd2d7"/><rect x="945" y="969.15" width="1.5" height="1.4" fill="#cfd2d7"/><rect x="941.4" y="971.70" width="1.5" height="1.4" fill="#cfd2d7"/><rect x="945" y="971.70" width="1.5" height="1.4" fill="#cfd2d7"/><rect x="941.4" y="974.25" width="1.5" height="1.4" fill="#cfd2d7"/><rect x="945" y="974.25" width="1.5" height="1.4" fill="#cfd2d7"/><rect x="941.4" y="976.80" width="1.5" height="1.4" fill="#cfd2d7"/><rect x="945" y="976.80" width="1.5" height="1.4" fill="#cfd2d7"/><rect x="941.4" y="979.35" width="1.5" height="1.4" fill="#cfd2d7"/><rect x="945" y="979.35" width="1.5" height="1.4" fill="#cfd2d7"/><rect x="941.4" y="981.90" width="1.5" height="1.4" fill="#cfd2d7"/><rect x="945" y="981.90" width="1.5" height="1.4" fill="#cfd2d7"/><rect x="941.4" y="984.45" width="1.5" height="1.4" fill="#cfd2d7"/><rect x="945" y="984.45" width="1.5" height="1.4" fill="#cfd2d7"/><rect x="941.4" y="987.00" width="1.5" height="1.4" fill="#cfd2d7"/><rect x="945" y="987.00" width="1.5" height="1.4" fill="#cfd2d7"/><rect x="1006" y="962.2" width="242.8" height="31.4" rx="2.5" fill="#c4c6ca"/><path d="M955 972.2 L966 983.2 M966 972.2 L955 983.2" stroke="#d6d9dd" stroke-width="2" fill="none"/><path d="M981 986 L991.5 975.5 Q990 971.5 993 969.5 Q995.5 968 998 969 L994.5 972.5 L996 975 L998.5 975.2 L1000.8 972.6 Q1001.5 976 999 978 Q996.5 979.8 994 978.2 L983.5 988.5 Q982 989 981 988 Q980.3 987 981 986 Z" fill="#d6d9dd"/><rect x="1012" y="970.8" width="18.4" height="14.6" fill="#b9bcc1" stroke="#59606b" stroke-width="1.2"/><rect x="1012" y="970.8" width="18.4" height="3.2" fill="#59606b"/><path d="M1014.2 976.8 L1017 978.8 L1014.2 980.8 M1018 981.6 L1022 981.6" stroke="#4a515c" stroke-width="1" fill="none"/><path d="M1034.6 975.8 L1041.6 975.8 L1038.1 980 Z" fill="#4d5560"/><path d="M1233.8 980.6 L1241.8 980.6 L1237.8 975.6 Z" fill="#4d5560"/></svg><div class="t" style="left:269.6px;top:223px;font-size:14.8px;letter-spacing:0.31px;color:#d3d7dc;">[−][Top][2D Wireframe]</div>
<div class="t" style="left:1821.3px;top:262px;font-size:22.5px;color:#b4b8bd;font-weight:bold;">N</div>
<div class="t" style="left:1821.5px;top:387px;font-size:22.5px;color:#b4b8bd;font-weight:bold;">S</div>
<div class="t" style="left:1756.2px;top:324px;font-size:22.5px;color:#b4b8bd;font-weight:bold;">W</div>
<div class="t" style="left:1884.5px;top:324px;font-size:22.5px;color:#b4b8bd;font-weight:bold;">E</div>
<div class="t" style="left:1817.0px;top:327px;font-size:16.5px;letter-spacing:-1.20px;transform:scaleX(0.7993);transform-origin:0 0;color:#636972;font-weight:bold;">TOP</div>
<div class="t" style="left:1805.0px;top:434px;font-size:13.4px;letter-spacing:-0.45px;transform:scaleX(0.9699);transform-origin:0 0;color:#676d77;">WCS</div>
<div class="t" style="left:1051.0px;top:973px;font-size:14.6px;letter-spacing:0.24px;color:#5c636e;font-style:italic;font-family:'Liberation Mono';">Type a command</div>
<!-- PROPERTIES -->
<div id="props" class="abs"></div>
<div class="abs" style="left:0;top:214px;width:262px;height:30px;background:#333b48"></div><div class="abs" style="left:262px;top:214px;width:4px;height:782px;background:#3d4656"></div><div class="abs" style="left:3px;top:294px;width:6px;height:639px;background:#29303d"></div><svg style="left:0;top:214px" width="20" height="30" viewBox="0 214 20 30"><rect x="8" y="225" width="1.1" height="1.1" fill="#9aa2af"/><rect x="10" y="225" width="1.1" height="1.1" fill="#9aa2af"/><rect x="8" y="227" width="1.1" height="1.1" fill="#9aa2af"/><rect x="10" y="227" width="1.1" height="1.1" fill="#9aa2af"/><rect x="8" y="229" width="1.1" height="1.1" fill="#9aa2af"/><rect x="10" y="229" width="1.1" height="1.1" fill="#9aa2af"/><rect x="8" y="231" width="1.1" height="1.1" fill="#9aa2af"/><rect x="10" y="231" width="1.1" height="1.1" fill="#9aa2af"/><rect x="8" y="233" width="1.1" height="1.1" fill="#9aa2af"/><rect x="10" y="233" width="1.1" height="1.1" fill="#9aa2af"/></svg><div class="abs" style="left:21px;top:260px;width:140px;height:28px;background:#4b5566;border:1px solid #5b6577"></div><svg style="left:140px;top:258px" width="120" height="32" viewBox="140 258 120 32">
<path d="M147.8 272.2 L156.2 272.2 L152 276.6 Z" fill="#e8eaed"/>
<rect x="172.6" y="267" width="9.4" height="9.4" fill="#d3dbf0" stroke="#1e2a48" stroke-width="0.9"/><rect x="177.6" y="272" width="9" height="9.4" fill="#bccaef" stroke="#1e2a48" stroke-width="0.9"/><path d="M180.8 267.6 L189.4 267.6 M185.1 263.4 L185.1 271.8" stroke="#2fc22f" stroke-width="3"/>
<circle cx="209.6" cy="272.8" r="2.9" fill="#2f3744" stroke="#e8eaed" stroke-width="1.5"/><path d="M201.6 272.8 L206 272.8 M213.2 272.8 L217.6 272.8 M209.6 264.8 L209.6 269.2 M209.6 276.4 L209.6 280.8" stroke="#e8eaed" stroke-width="1.6"/>
<circle cx="238.6" cy="272.8" r="2.9" fill="#2f3744" stroke="#e8eaed" stroke-width="1.5"/><path d="M230.6 272.8 L235 272.8 M238.6 264.8 L238.6 269.2 M238.6 276.4 L238.6 280.6" stroke="#e8eaed" stroke-width="1.6"/><path d="M248 264 L244 270.6 L247 270.6 L243.6 276" stroke="#f0a828" stroke-width="2" fill="none"/><rect x="241.4" y="275.4" width="8" height="8.6" fill="#f4f5f6"/><path d="M241.4 278.3 L249.4 278.3 M241.4 281.1 L249.4 281.1 M245.4 275.4 L245.4 284" stroke="#222" stroke-width="0.8"/>
</svg><div class="abs" style="left:20px;top:293.4px;width:229px;height:26.6px;background:#2c333f"></div><svg style="left:226px;top:294px" width="16" height="26"><path d="M2.4 9.6 L13 9.6 L7.7 15.2 Z" fill="#e8eaed"/></svg><div class="abs" style="left:41px;top:320px;width:208px;height:26px;background:#3d4657;border-top:1px solid #303845;border-left:1px solid #303845"></div><div class="abs" style="left:131px;top:320px;width:1px;height:26px;background:#303845"></div><div class="abs" style="left:248px;top:320px;width:1px;height:26px;background:#303845"></div><div class="abs" style="left:136px;top:326px;width:13px;height:13px;background:#fff;border:1px solid #2a313c"></div><div class="abs" style="left:41px;top:346px;width:208px;height:26px;background:#3d4657;border-top:1px solid #303845;border-left:1px solid #303845"></div><div class="abs" style="left:131px;top:346px;width:1px;height:26px;background:#303845"></div><div class="abs" style="left:248px;top:346px;width:1px;height:26px;background:#303845"></div><div class="abs" style="left:41px;top:372px;width:208px;height:26px;background:#3d4657;border-top:1px solid #303845;border-left:1px solid #303845"></div><div class="abs" style="left:131px;top:372px;width:1px;height:26px;background:#303845"></div><div class="abs" style="left:248px;top:372px;width:1px;height:26px;background:#303845"></div><div class="abs" style="left:137px;top:385px;width:50px;height:1px;background:#e8eaed"></div><div class="abs" style="left:41px;top:398px;width:208px;height:26px;background:#3d4657;border-top:1px solid #303845;border-left:1px solid #303845"></div><div class="abs" style="left:131px;top:398px;width:1px;height:26px;background:#303845"></div><div class="abs" style="left:248px;top:398px;width:1px;height:26px;background:#303845"></div><div class="abs" style="left:41px;top:424px;width:208px;height:26px;background:#3d4657;border-top:1px solid #303845;border-left:1px solid #303845"></div><div class="abs" style="left:131px;top:424px;width:1px;height:26px;background:#303845"></div><div class="abs" style="left:248px;top:424px;width:1px;height:26px;background:#303845"></div><div class="abs" style="left:135.5px;top:437px;width:50px;height:1px;background:#e8eaed"></div><div class="abs" style="left:41px;top:450px;width:208px;height:26px;background:#3d4657;border-top:1px solid #303845;border-left:1px solid #303845"></div><div class="abs" style="left:131px;top:450px;width:1px;height:26px;background:#303845"></div><div class="abs" style="left:248px;top:450px;width:1px;height:26px;background:#303845"></div><div class="abs" style="left:41px;top:476px;width:208px;height:26px;background:#3d4657;border-top:1px solid #303845;border-left:1px solid #303845"></div><div class="abs" style="left:131px;top:476px;width:1px;height:26px;background:#303845"></div><div class="abs" style="left:248px;top:476px;width:1px;height:26px;background:#303845"></div><div class="abs" style="left:41px;top:502px;width:208px;height:1px;background:#303845"></div><div class="abs" style="left:20px;top:506.4px;width:229px;height:26.6px;background:#2c333f"></div><svg style="left:228px;top:507px" width="14" height="26"><path d="M10.6 7.6 L10.6 18.2 L4.6 12.9 Z" fill="#e8eaed"/></svg><div class="abs" style="left:20px;top:537.4px;width:229px;height:26.6px;background:#2c333f"></div><svg style="left:226px;top:538px" width="16" height="26"><path d="M2.4 9.6 L13 9.6 L7.7 15.2 Z" fill="#e8eaed"/></svg><div class="abs" style="left:41px;top:564px;width:208px;height:26px;background:#3d4657;border-top:1px solid #303845;border-left:1px solid #303845"></div><div class="abs" style="left:131px;top:564px;width:1px;height:26px;background:#303845"></div><div class="abs" style="left:248px;top:564px;width:1px;height:26px;background:#303845"></div><div class="abs" style="left:41px;top:590px;width:208px;height:26px;background:#3d4657;border-top:1px solid #303845;border-left:1px solid #303845"></div><div class="abs" style="left:131px;top:590px;width:1px;height:26px;background:#303845"></div><div class="abs" style="left:248px;top:590px;width:1px;height:26px;background:#303845"></div><div class="abs" style="left:41px;top:616px;width:208px;height:26px;background:#3d4657;border-top:1px solid #303845;border-left:1px solid #303845"></div><div class="abs" style="left:131px;top:616px;width:1px;height:26px;background:#303845"></div><div class="abs" style="left:248px;top:616px;width:1px;height:26px;background:#303845"></div><div class="abs" style="left:41px;top:642px;width:208px;height:26px;background:#3d4657;border-top:1px solid #303845;border-left:1px solid #303845"></div><div class="abs" style="left:131px;top:642px;width:1px;height:26px;background:#303845"></div><div class="abs" style="left:248px;top:642px;width:1px;height:26px;background:#303845"></div><div class="abs" style="left:41px;top:668px;width:208px;height:1px;background:#303845"></div><div class="abs" style="left:20px;top:672.4px;width:229px;height:26.6px;background:#2c333f"></div><svg style="left:226px;top:673px" width="16" height="26"><path d="M2.4 9.6 L13 9.6 L7.7 15.2 Z" fill="#e8eaed"/></svg><div class="abs" style="left:41px;top:699px;width:208px;height:26px;background:#3d4657;border-top:1px solid #303845;border-left:1px solid #303845"></div><div class="abs" style="left:131px;top:699px;width:1px;height:26px;background:#303845"></div><div class="abs" style="left:248px;top:699px;width:1px;height:26px;background:#303845"></div><div class="abs" style="left:41px;top:725px;width:208px;height:26px;background:#3d4657;border-top:1px solid #303845;border-left:1px solid #303845"></div><div class="abs" style="left:131px;top:725px;width:1px;height:26px;background:#303845"></div><div class="abs" style="left:248px;top:725px;width:1px;height:26px;background:#303845"></div><div class="abs" style="left:41px;top:751px;width:208px;height:26px;background:#3d4657;border-top:1px solid #303845;border-left:1px solid #303845"></div><div class="abs" style="left:131px;top:751px;width:1px;height:26px;background:#303845"></div><div class="abs" style="left:248px;top:751px;width:1px;height:26px;background:#303845"></div><div class="abs" style="left:41px;top:777px;width:208px;height:26px;background:#3d4657;border-top:1px solid #303845;border-left:1px solid #303845"></div><div class="abs" style="left:131px;top:777px;width:1px;height:26px;background:#303845"></div><div class="abs" style="left:248px;top:777px;width:1px;height:26px;background:#303845"></div><div class="abs" style="left:41px;top:803px;width:208px;height:26px;background:#3d4657;border-top:1px solid #303845;border-left:1px solid #303845"></div><div class="abs" style="left:131px;top:803px;width:1px;height:26px;background:#303845"></div><div class="abs" style="left:248px;top:803px;width:1px;height:26px;background:#303845"></div><div class="abs" style="left:41px;top:829px;width:208px;height:1px;background:#303845"></div><div class="abs" style="left:20px;top:833.4px;width:229px;height:26.6px;background:#2c333f"></div><svg style="left:226px;top:834px" width="16" height="26"><path d="M2.4 9.6 L13 9.6 L7.7 15.2 Z" fill="#e8eaed"/></svg><div class="abs" style="left:41px;top:860px;width:208px;height:26px;background:#3d4657;border-top:1px solid #303845;border-left:1px solid #303845"></div><div class="abs" style="left:131px;top:860px;width:1px;height:26px;background:#303845"></div><div class="abs" style="left:248px;top:860px;width:1px;height:26px;background:#303845"></div><div class="abs" style="left:41px;top:886px;width:208px;height:26px;background:#3d4657;border-top:1px solid #303845;border-left:1px solid #303845"></div><div class="abs" style="left:131px;top:886px;width:1px;height:26px;background:#303845"></div><div class="abs" style="left:248px;top:886px;width:1px;height:26px;background:#303845"></div><div class="abs" style="left:41px;top:912px;width:208px;height:26px;background:#3d4657;border-top:1px solid #303845;border-left:1px solid #303845"></div><div class="abs" style="left:131px;top:912px;width:1px;height:26px;background:#303845"></div><div class="abs" style="left:248px;top:912px;width:1px;height:26px;background:#303845"></div><div class="abs" style="left:41px;top:938px;width:208px;height:26px;background:#3d4657;border-top:1px solid #303845;border-left:1px solid #303845"></div><div class="abs" style="left:131px;top:938px;width:1px;height:26px;background:#303845"></div><div class="abs" style="left:248px;top:938px;width:1px;height:26px;background:#303845"></div><div class="abs" style="left:41px;top:964px;width:208px;height:26px;background:#3d4657;border-top:1px solid #303845;border-left:1px solid #303845"></div><div class="abs" style="left:131px;top:964px;width:1px;height:26px;background:#303845"></div><div class="abs" style="left:248px;top:964px;width:1px;height:26px;background:#303845"></div><div class="abs" style="left:41px;top:990px;width:208px;height:1px;background:#303845"></div><div class="t" style="left:18.6px;top:222px;font-size:15px;letter-spacing:-0.45px;transform:scaleX(0.8616);transform-origin:0 0;color:#f0f2f4;">PROPERTIES</div>
<div class="t" style="left:25.7px;top:266px;font-size:15px;color:#f2f4f6;">No selection</div>
<div class="t" style="left:29.0px;top:299px;font-size:15px;letter-spacing:-0.24px;color:#f4f5f7;font-weight:bold;">General</div>
<div class="t" style="left:51.2px;top:325px;font-size:15px;letter-spacing:-0.17px;color:#e6e9ec;">Color</div>
<div class="t" style="left:156.2px;top:325px;font-size:15px;letter-spacing:-0.45px;transform:scaleX(0.9734);transform-origin:0 0;color:#f2f4f6;">ByLayer</div>
<div class="t" style="left:51.2px;top:351px;font-size:15px;letter-spacing:-0.31px;color:#e6e9ec;">Layer</div>
<div class="t" style="left:134.4px;top:351px;font-size:15px;color:#f2f4f6;">0</div>
<div class="t" style="left:51.2px;top:377px;font-size:15px;color:#e6e9ec;">Linetype</div>
<div class="t" style="left:192.5px;top:377px;font-size:15px;letter-spacing:-0.45px;transform:scaleX(0.9734);transform-origin:0 0;color:#f2f4f6;">ByLayer</div>
<div class="t" style="left:50.2px;top:403px;font-size:15px;letter-spacing:-0.41px;color:#e6e9ec;">Linetype…</div>
<div class="t" style="left:134.4px;top:403px;font-size:15px;color:#f2f4f6;">1</div>
<div class="t" style="left:51.2px;top:429px;font-size:15px;letter-spacing:0.23px;color:#e6e9ec;">Lineweight</div>
<div class="t" style="left:191.5px;top:429px;font-size:15px;letter-spacing:-0.45px;transform:scaleX(0.9734);transform-origin:0 0;color:#f2f4f6;">ByLayer</div>
<div class="t" style="left:50.2px;top:455px;font-size:15px;letter-spacing:-0.45px;transform:scaleX(0.9730);transform-origin:0 0;color:#e6e9ec;">Transpare…</div>
<div class="t" style="left:134.4px;top:455px;font-size:15px;letter-spacing:-0.45px;transform:scaleX(0.9734);transform-origin:0 0;color:#f2f4f6;">ByLayer</div>
<div class="t" style="left:51.2px;top:481px;font-size:15px;letter-spacing:-0.43px;color:#e6e9ec;">Thickness</div>
<div class="t" style="left:134.4px;top:481px;font-size:15px;color:#f2f4f6;">0</div>
<div class="t" style="left:29.0px;top:512px;font-size:15px;letter-spacing:-0.11px;color:#f4f5f7;font-weight:bold;">3D Visualization</div>
<div class="t" style="left:29.0px;top:543px;font-size:15px;letter-spacing:-0.17px;color:#f4f5f7;font-weight:bold;">Plot style</div>
<div class="t" style="left:51.2px;top:569px;font-size:15px;letter-spacing:-0.15px;color:#e6e9ec;">Plot style</div>
<div class="t" style="left:134.4px;top:569px;font-size:15px;letter-spacing:-0.18px;color:#98a1af;">ByColor</div>
<div class="t" style="left:50.2px;top:595px;font-size:15px;letter-spacing:-0.21px;color:#e6e9ec;">Plot style…</div>
<div class="t" style="left:134.4px;top:595px;font-size:15px;letter-spacing:0.11px;color:#f2f4f6;">None</div>
<div class="t" style="left:50.2px;top:621px;font-size:15px;letter-spacing:-0.20px;color:#e6e9ec;">Plot table…</div>
<div class="t" style="left:134.4px;top:621px;font-size:15px;letter-spacing:0.47px;color:#98a1af;">Model</div>
<div class="t" style="left:50.2px;top:647px;font-size:15px;letter-spacing:-0.20px;color:#e6e9ec;">Plot table…</div>
<div class="t" style="left:134.4px;top:647px;font-size:15px;letter-spacing:0.13px;color:#98a1af;">Not available</div>
<div class="t" style="left:29.0px;top:678px;font-size:15px;letter-spacing:-0.06px;color:#f4f5f7;font-weight:bold;">View</div>
<div class="t" style="left:51.2px;top:704px;font-size:15px;letter-spacing:-0.30px;color:#e6e9ec;">Center X</div>
<div class="t" style="left:134.4px;top:704px;font-size:15px;letter-spacing:-0.45px;transform:scaleX(0.9917);transform-origin:0 0;color:#98a1af;">3391.6459</div>
<div class="t" style="left:51.2px;top:730px;font-size:15px;letter-spacing:-0.37px;color:#e6e9ec;">Center Y</div>
<div class="t" style="left:134.4px;top:730px;font-size:15px;letter-spacing:-0.45px;transform:scaleX(0.9812);transform-origin:0 0;color:#98a1af;">1440.6841</div>
<div class="t" style="left:51.2px;top:756px;font-size:15px;letter-spacing:-0.29px;color:#e6e9ec;">Center Z</div>
<div class="t" style="left:134.4px;top:756px;font-size:15px;color:#98a1af;">0</div>
<div class="t" style="left:51.2px;top:782px;font-size:15px;letter-spacing:0.36px;color:#e6e9ec;">Height</div>
<div class="t" style="left:134.4px;top:782px;font-size:15px;letter-spacing:-0.45px;transform:scaleX(0.9872);transform-origin:0 0;color:#98a1af;">2536.8585</div>
<div class="t" style="left:51.2px;top:808px;font-size:15px;letter-spacing:0.31px;color:#e6e9ec;">Width</div>
<div class="t" style="left:134.4px;top:808px;font-size:15px;letter-spacing:-0.45px;transform:scaleX(0.9851);transform-origin:0 0;color:#98a1af;">5934.881</div>
<div class="t" style="left:29.0px;top:839px;font-size:15px;letter-spacing:-0.31px;color:#f4f5f7;font-weight:bold;">Misc</div>
<div class="t" style="left:50.1px;top:865px;font-size:15px;letter-spacing:-0.05px;color:#e6e9ec;">Annotati…</div>
<div class="t" style="left:134.4px;top:865px;font-size:15px;letter-spacing:-0.45px;transform:scaleX(0.8816);transform-origin:0 0;color:#f2f4f6;">1:1</div>
<div class="t" style="left:50.1px;top:891px;font-size:15px;letter-spacing:-0.45px;transform:scaleX(0.9770);transform-origin:0 0;color:#e6e9ec;">UCS icon…</div>
<div class="t" style="left:134.4px;top:891px;font-size:15px;letter-spacing:-0.45px;transform:scaleX(0.9423);transform-origin:0 0;color:#f2f4f6;">Yes</div>
<div class="t" style="left:50.1px;top:917px;font-size:15px;letter-spacing:-0.45px;transform:scaleX(0.9770);transform-origin:0 0;color:#e6e9ec;">UCS icon…</div>
<div class="t" style="left:134.4px;top:917px;font-size:15px;letter-spacing:-0.45px;transform:scaleX(0.9423);transform-origin:0 0;color:#f2f4f6;">Yes</div>
<div class="t" style="left:50.1px;top:943px;font-size:15px;letter-spacing:-0.45px;transform:scaleX(0.9751);transform-origin:0 0;color:#e6e9ec;">UCS per v…</div>
<div class="t" style="left:134.4px;top:943px;font-size:15px;letter-spacing:-0.45px;transform:scaleX(0.9423);transform-origin:0 0;color:#f2f4f6;">Yes</div>
<div class="t" style="left:51.2px;top:969px;font-size:15px;letter-spacing:-0.45px;transform:scaleX(0.9272);transform-origin:0 0;color:#e6e9ec;">UCS Name</div><div class="abs" style="left:0;top:975px;width:262px;height:21px;background:#3b4453"></div>
<!-- BOTTOM -->
<div id="bottom" class="abs"></div>
<svg style="left:0;top:996px" width="1916" height="34" viewBox="0 996 1916 34"><path d="M13 996 L88 996 L83 1011 Q81.5 1018.5 75 1018.5 L27 1018.5 Q20.5 1018.5 19 1011 Z" fill="#323a47"/><path d="M92 996 L171 996 L166 1011 Q164.5 1018.5 158 1018.5 L104 1018.5 Q98 1018.5 96.5 1011 Z" fill="#2b323d"/><path d="M173 996 L252 996 L247 1011 Q245.5 1018.5 239 1018.5 L185 1018.5 Q179 1018.5 177.5 1011 Z" fill="#2b323d"/><path d="M256 996 L281.5 996 L277.5 1011 Q276 1017.5 270 1017.5 L263 1017.5 Q258.5 1017.5 257.5 1011 Z" fill="#2b323d"/><path d="M263 1006.8 L273 1006.8 M268 1001.8 L268 1011.8" stroke="#b9bec6" stroke-width="2.2"/><rect x="1246" y="996" width="670" height="34" fill="#232a34"/><rect x="1247" y="997" width="141" height="29.4" fill="#343c49"/><rect x="1391" y="997" width="207.5" height="29.4" fill="#343c49"/><rect x="1602.5" y="997" width="130.0" height="29.4" fill="#343c49"/><rect x="1736" y="997" width="113.5" height="29.4" fill="#343c49"/><rect x="1859" y="997" width="57" height="29.4" fill="#343c49"/><rect x="1852.8" y="997" width="3.6" height="29.4" fill="#2f3743"/><rect x="1306.5" y="998" width="1" height="27.4" fill="#2a313c"/><rect x="1785.4" y="998" width="1" height="27.4" fill="#2a313c"/><rect x="1817.3" y="998" width="1" height="27.4" fill="#2a313c"/><rect x="1309.6" y="998" width="28.4" height="27.6" fill="#5b8dcf"/><rect x="1317.1000000000001" y="1002.8" width="1.3" height="17.6" fill="#e6e8ea"/><rect x="1322.9" y="1002.8" width="1.3" height="17.6" fill="#e6e8ea"/><rect x="1328.7" y="1002.8" width="1.3" height="17.6" fill="#e6e8ea"/><rect x="1313.6" y="1006.8" width="19.6" height="1.3" fill="#e6e8ea"/><rect x="1313.6" y="1011.6" width="19.6" height="1.3" fill="#e6e8ea"/><rect x="1313.6" y="1016.4" width="19.6" height="1.3" fill="#e6e8ea"/><rect x="1346.6" y="1005.0" width="2.6" height="2.6" fill="#e6e8ea"/><rect x="1346.6" y="1010.5" width="2.6" height="2.6" fill="#e6e8ea"/><rect x="1346.6" y="1016.1" width="2.6" height="2.6" fill="#e6e8ea"/><rect x="1352.3" y="1005.0" width="2.6" height="2.6" fill="#e6e8ea"/><rect x="1352.3" y="1010.5" width="2.6" height="2.6" fill="#e6e8ea"/><rect x="1352.3" y="1016.1" width="2.6" height="2.6" fill="#e6e8ea"/><rect x="1358.0" y="1005.0" width="2.6" height="2.6" fill="#e6e8ea"/><rect x="1358.0" y="1010.5" width="2.6" height="2.6" fill="#e6e8ea"/><rect x="1358.0" y="1016.1" width="2.6" height="2.6" fill="#e6e8ea"/><path d="M1373.9 1008.8 L1382.9 1008.8 L1378.4 1014.0 Z" fill="#e6e8ea"/><path d="M1455.8 1008.8 L1464.8 1008.8 L1460.3 1014.0 Z" fill="#e6e8ea"/><path d="M1504.9 1008.8 L1513.9 1008.8 L1509.4 1014.0 Z" fill="#e6e8ea"/><path d="M1584.8 1008.8 L1593.8 1008.8 L1589.3 1014.0 Z" fill="#e6e8ea"/><path d="M1718.8 1008.8 L1727.8 1008.8 L1723.3 1014.0 Z" fill="#e6e8ea"/><path d="M1770.6 1008.8 L1779.6 1008.8 L1775.1 1014.0 Z" fill="#e6e8ea"/><path d="M1396.5 1002.4 L1396.5 1021.6 L1415.7 1021.6 M1396.5 1015.7 L1401.8 1015.7 L1401.8 1021.6" stroke="#e6e8ea" stroke-width="1.2" fill="none"/><rect x="1422" y="998" width="28.3" height="27.6" fill="#5b8dcf"/><circle cx="1433" cy="1012.2" r="8" fill="none" stroke="#e6e8ea" stroke-width="1.3"/><path d="M1433 1012.2 L1442.3 1003.3 M1433 1012.2 L1446 1012.2" stroke="#e6e8ea" stroke-width="1.2" fill="none"/><path d="M1485.3 1002 L1485.3 1019.8" stroke="#4fae7a" stroke-width="1.1"/><path d="M1477.8 1003.3 L1492 1018" stroke="#c4455c" stroke-width="1.1"/><rect x="1483.8" y="1009.4" width="3" height="3" fill="#343c49" stroke="#e6e8ea" stroke-width=".9"/><rect x="1520.4" y="998" width="29.3" height="27.6" fill="#5b8dcf"/><path d="M1525.7 1018.4 L1544.3 1018.4 M1525.7 1018.4 L1539.9 1005" stroke="#e6e8ea" stroke-width="1.3" fill="none"/><rect x="1531.2" y="1010" width="3.4" height="3.4" fill="#e6e8ea"/><rect x="1551" y="998" width="28" height="27.6" fill="#5b8dcf"/><rect x="1557.7" y="1005.6" width="16.8" height="16" fill="none" stroke="#e6e8ea" stroke-width="1.3"/><rect x="1555" y="1002.8" width="5.3" height="5" fill="#5b8dcf" stroke="#e6e8ea" stroke-width="1.1"/><rect x="1602.6" y="998" width="28.4" height="27.6" fill="#5b8dcf"/><path d="M1615.6 1001.5 L1619.1999999999998 1012.5 L1624.1999999999998 1021.1 L1619.0 1017.7 L1615.6 1021.5 L1612.1999999999998 1017.7 L1607.0 1021.1 L1612.0 1012.5 Z" fill="#f4f5f6"/><circle cx="1623" cy="1006.3" r="3.3" fill="none" stroke="#f4f5f6" stroke-width="1.1"/><path d="M1645.6 1001.5 L1649.1999999999998 1012.5 L1654.1999999999998 1021.1 L1649.0 1017.7 L1645.6 1021.5 L1642.1999999999998 1017.7 L1637.0 1021.1 L1642.0 1012.5 Z" fill="#d4d7db"/><path d="M1655 1002.6 L1651.6 1007 L1654.4 1007 L1651.4 1011" stroke="#d4d7db" stroke-width="1.3" fill="none"/><path d="M1676.6 1001.5 L1680.1999999999998 1012.5 L1685.1999999999998 1021.1 L1680.0 1017.7 L1676.6 1021.5 L1673.1999999999998 1017.7 L1668.0 1021.1 L1673.0 1012.5 Z" fill="#d4d7db"/><polygon points="1761.3,1010.8 1761.3,1012.8 1758.1,1013.9 1757.5,1015.3 1759.0,1018.3 1757.5,1019.8 1754.5,1018.3 1753.1,1018.9 1752.0,1022.1 1750.0,1022.1 1748.9,1018.9 1747.5,1018.3 1744.5,1019.8 1743.0,1018.3 1744.5,1015.3 1743.9,1013.9 1740.7,1012.8 1740.7,1010.8 1743.9,1009.7 1744.5,1008.3 1743.0,1005.3 1744.5,1003.8 1747.5,1005.3 1748.9,1004.7 1750.0,1001.5 1752.0,1001.5 1753.1,1004.7 1754.5,1005.3 1757.5,1003.8 1759.0,1005.3 1757.5,1008.3 1758.1,1009.7" fill="#e6e8ea"/><circle cx="1751" cy="1011.8" r="3.3" fill="#343c49"/><path d="M1791 1011.5 L1810 1011.5 M1800.5 1002 L1800.5 1021" stroke="#e6e8ea" stroke-width="2.6"/><rect x="1824" y="1002.8" width="7.5" height="6.8" fill="none" stroke="#e6e8ea" stroke-width="1.2"/><circle cx="1839" cy="1010.4" r="4.1" fill="none" stroke="#e6e8ea" stroke-width="1.2"/><path d="M1827 1021.4 L1831.5 1014.5 L1836 1021.4 Z" fill="none" stroke="#e6e8ea" stroke-width="1.2"/><rect x="1864.4" y="1004.5" width="19.5" height="14" fill="none" stroke="#e6e8ea" stroke-width="1.3"/><path d="M1867.6 1015.6 L1872 1011.6 M1867.6 1012.4 L1867.6 1015.6 L1871 1015.6 M1880.6 1007.4 L1876.2 1011.4 M1880.6 1010.6 L1880.6 1007.4 L1877.2 1007.4" stroke="#e6e8ea" stroke-width="1.2" fill="none"/><rect x="1893.7" y="1003" width="22.3" height="2.6" fill="#e6e8ea"/><rect x="1893.7" y="1010.4" width="22.3" height="2.6" fill="#e6e8ea"/><rect x="1893.7" y="1017.2" width="22.3" height="2.6" fill="#e6e8ea"/></svg><div class="t" style="left:28.3px;top:1000px;font-size:14.8px;letter-spacing:0.17px;color:#f4f5f7;font-weight:bold;">Model</div>
<div class="t" style="left:101.2px;top:1000px;font-size:14.8px;letter-spacing:-0.27px;color:#c3c8d0;">Layout1</div>
<div class="t" style="left:182.4px;top:1000px;font-size:14.8px;letter-spacing:-0.19px;color:#c3c8d0;">Layout2</div>
<div class="t" style="left:1252.0px;top:1006px;font-size:14.8px;letter-spacing:-0.45px;transform:scaleX(0.9767);transform-origin:0 0;color:#eceef0;">MODEL</div>
<div class="t" style="left:1698.4px;top:1006px;font-size:14.8px;letter-spacing:-0.30px;transform:scaleX(0.7826);transform-origin:0 0;color:#eceef0;">1:1</div>
<!-- DIALOG -->
<div id="dlg" class="abs">
<div id="dlgTitle" class="abs"></div>
</div>
<svg style="left:540px;top:205px" width="24" height="26" viewBox="540 205 24 26"><rect x="542" y="209.2" width="18.8" height="18.6" rx="2" fill="#fbf1ec"/><g transform="translate(551.2 218.3) scale(.84) translate(-551.2 -218.3)"><path d="M543 227.5 L549 209.6 L554 209.6 L559.6 227.2 L555 226.6 L553.6 222.6 L548 223.6 L547 226.8 Z M549 220.4 L553 219.6 L551.2 214 Z" fill="#c0232c" fill-rule="evenodd"/><path d="M551.5 209.6 L554 209.6 L559.6 227.2 L557 226.8 Z" fill="#8e141c" opacity=".5"/></g></svg>
<svg style="left:1358px;top:210px" width="18" height="18" viewBox="1358 210 18 18"><path d="M1361 213.5 L1373.4 225.2 M1373.4 213.5 L1361 225.2" stroke="#1a1a1a" stroke-width="1.3" fill="none"/></svg><div class="abs" style="left:704px;top:248.5px;width:325.5px;height:25.5px;background:#e2e2e2;border:1px solid #adadad;border-radius:2px"></div><svg style="left:708px;top:250px" width="22" height="22" viewBox="708 250 22 22"><path d="M712.5 253.5 L718 252 L718 270.5 L712.5 269 Z" fill="#f5d98a"/><path d="M718 254 L724.5 254 L724.5 268.5 L718 270.5 Z" fill="#e8b84e"/><path d="M712.5 253.5 L718 252 L718 270.5 L712.5 269 Z" fill="none" stroke="#d9a93a" stroke-width=".5"/></svg>
<svg style="left:1012px;top:254px" width="16" height="14" viewBox="1012 254 16 14"><path d="M1015 258.5 L1019.7 263.2 L1024.4 258.5" stroke="#444" stroke-width="1.1" fill="none"/></svg><svg style="left:1040px;top:246px" width="170" height="26" viewBox="1040 246 170 26">
<path d="M1045.6 258.8 L1054.6 250.6 L1054.6 255.4 L1064.8 255.4 L1064.8 262.6 L1054.6 262.6 L1054.6 267 Z" fill="#4b6fdc" stroke="#b568d9" stroke-width="1.3" stroke-linejoin="round"/>
<path d="M1079.5 250 L1087 250 L1088.5 252 L1096 252 L1096 264 L1079.5 264 Z" fill="#e3a45e" stroke="#c98a45" stroke-width=".8"/><rect x="1079.5" y="253.6" width="16.5" height="10.4" fill="#eab06c"/><path d="M1094 261 L1099.2 267.6 L1096 267.6 L1096 269 L1092 269 L1092 267.6 L1088.8 267.6 Z" fill="#4458d0" stroke="#a45fd6" stroke-width=".7"/>
<circle cx="1121" cy="257.6" r="7.8" fill="#8fa6d8" stroke="#7b62c9" stroke-width="1.2"/><path d="M1116 252 Q1120 250.5 1125 252.5 Q1123 256 1119 255 Q1116 256 1115 254 Z" fill="#5ba86a"/><circle cx="1125" cy="261.6" r="4.2" fill="#e9f0fb" stroke="#39439f" stroke-width="1.3"/><path d="M1128 264.8 L1132 268.6" stroke="#2e3a9a" stroke-width="2.2"/>
<path d="M1148.6 253.4 L1151.6 250.6 L1157 255.8 L1162.4 250.6 L1165.6 253.4 L1160.2 258.8 L1165.6 264.2 L1162.4 267.2 L1157 261.8 L1151.6 267.2 L1148.6 264.2 L1154 258.8 Z" fill="#de4a62" stroke="#e597b5" stroke-width="1"/>
<path d="M1179.5 250 L1187 250 L1188.5 252 L1196 252 L1196 264 L1179.5 264 Z" fill="#e3a45e" stroke="#c98a45" stroke-width=".8"/><rect x="1179.5" y="253.6" width="16.5" height="10.4" fill="#eab06c"/><path d="M1193.6 262 L1196.4 262 L1196.4 264.4 L1199 264.4 L1199 267.2 L1196.4 267.2 L1196.4 269.6 L1193.6 269.6 L1193.6 267.2 L1191 267.2 L1191 264.4 L1193.6 264.4 Z" fill="#4458d0" stroke="#a45fd6" stroke-width=".6"/>
</svg>
<svg style="left:1220px;top:250px" width="160" height="18" viewBox="1220 250 160 18"><path d="M1279.8 255.6 L1290.4 255.6 L1285.1 260.4 Z" fill="#000"/><path d="M1359.4 255.6 L1370.8 255.6 L1365.1 260.4 Z" fill="#000"/><rect x="1225" y="263.2" width="7.6" height="1" fill="#000"/><rect x="1330" y="263.2" width="2.6" height="1" fill="#000"/></svg><div class="abs" style="left:538px;top:282px;width:152px;height:526px;background:#bfcddd;border:1px solid #8a8d91;box-shadow:inset 0 0 0 1px #e9eef4"></div><svg style="left:588px;top:286px" width="50" height="264" viewBox="588 286 50 264">
<rect x="617.4" y="301" width="13.4" height="19.4" fill="#fbfbfb" stroke="#8a8f96" stroke-width=".8"/><path d="M620 305 L628.4 305 M620 308 L628.4 308 M620 311 L628.4 311 M620 314 L628.4 314" stroke="#7c8188" stroke-width=".7"/><rect x="624.5" y="305.4" width="4.2" height="3.6" fill="#6c95b7"/>
<circle cx="605" cy="300.2" r="10.2" fill="#e7eaee" stroke="#8f959d" stroke-width="1.4"/><circle cx="605" cy="300.2" r="7.8" fill="#fafbfc" stroke="#c5c9ce" stroke-width=".6"/><path d="M605 294.5 L605 300.4 L609.5 302.5" stroke="#3c4047" stroke-width="1.1" fill="none"/>
<rect x="600.6" y="308.6" width="20" height="15" fill="#f4f6f8" stroke="#9aa0a8" stroke-width=".8"/><rect x="602" y="310" width="17.2" height="12.2" fill="#7faac6"/><path d="M602 318.5 Q606 314 610 317 Q614 319.5 619.2 316 L619.2 322.2 L602 322.2 Z" fill="#3f6d84"/><path d="M602 320 L619.2 319 L619.2 322.2 L602 322.2 Z" fill="#c9d9e2" opacity=".6"/>
<path d="M600 368.5 L607.5 368 L607.5 402.5 L600 398.5 Z" fill="#f7dd8e"/><path d="M607.5 370.5 L621.4 370.5 L621.4 398 L607.5 402.5 Z" fill="#edc25b"/><path d="M600 368.5 L607.5 368 L607.5 402.5 L600 398.5 Z" fill="none" stroke="#dcb146" stroke-width=".5"/>
<path d="M611.5 377 L623.5 377 L628.2 381.5 L628.2 398 L611.5 398 Z" fill="#fdfdfd" stroke="#8b9097" stroke-width=".8"/><path d="M614 384 L626 384 M614 387 L619 387 M614 390 L619 390 M614 393 L626 393 M614 395.5 L626 395.5" stroke="#6b7f99" stroke-width=".7"/><rect x="620.4" y="386" width="5.6" height="5" fill="#4e9a8a"/><path d="M615.5 380 L618.5 380" stroke="#2f62c9" stroke-width="1.6"/>
<defs><linearGradient id="dg" x1="0" y1="0" x2="1" y2="1"><stop offset="0" stop-color="#1b8fe8"/><stop offset=".55" stop-color="#23a2f4"/><stop offset="1" stop-color="#1f96ec"/></linearGradient><linearGradient id="cg" x1="0" y1="0" x2="0" y2="1"><stop offset="0" stop-color="#1c79d4"/><stop offset="1" stop-color="#2a9af0"/></linearGradient></defs>
<rect x="595" y="446.2" width="35.6" height="25.4" fill="url(#dg)" stroke="#1a6fb8" stroke-width=".8"/><path d="M596.5 470.3 L602 470.3 M624 470.3 L629.5 470.3" stroke="#d8ecfb" stroke-width=".8" stroke-dasharray="1 1"/><path d="M604 471 L630 448 L630.6 471 Z" fill="#2fb0ff" opacity=".35"/>
<path d="M600.5 546.4 Q593 546 593 539.5 Q593 533.8 599.2 532.6 Q600.2 524.4 608.4 521 Q617.6 518 622.6 526.6 Q628 525.6 631 530 Q633.6 534 631.6 538.6 Q633.8 543.8 628.4 546.4 Z" fill="url(#cg)"/>
<path d="M599.2 532.6 Q600.2 524.4 608.4 521 Q617.6 518 622.6 526.6 L609 536 Q603.5 531.5 599.2 532.6 Z" fill="#0f5fb8"/><path d="M593.2 541 Q592.5 534 599.2 532.6 Q604.5 531.6 609 536 L625 546.4 L600.5 546.4 Q594 546 593.2 541 Z" fill="#1a86de"/><path d="M609 536 L622.6 526.6 Q628 525.6 631 530 Q633.6 534 631.6 538.6 L618.6 542.4 Z" fill="#1470cc"/><path d="M618.6 542.4 L631.6 538.6 Q633.8 543.8 628.4 546.4 L625 546.4 Z" fill="#36a4f2"/>
</svg><div class="abs" style="left:704px;top:282px;width:306px;height:404px;background:#fff"></div><div class="abs" style="left:903px;top:282px;width:1px;height:404px;background:#ececec"></div><div class="abs" style="left:1010px;top:282px;width:19.5px;height:404px;background:#f0f0f0"></div><div class="abs" style="left:1011px;top:304px;width:18.4px;height:199.5px;background:#cdcdcd"></div><div class="abs" style="left:724.5px;top:687px;width:127.5px;height:18px;background:#cdcdcd"></div><svg style="left:704px;top:282px" width="326" height="426" viewBox="704 282 326 426"><path d="M799.6 287.6 L804.2 283.4 L808.8 287.6" stroke="#6a6a6a" stroke-width="1" fill="none"/>
<path d="M1014.6 295.2 L1019.6 290.2 L1024.6 295.2" stroke="#404040" stroke-width="1.6" fill="none"/><path d="M1014.6 672 L1019.6 677 L1024.6 672" stroke="#404040" stroke-width="1.6" fill="none"/>
<path d="M716 691.5 L711.4 696 L716 700.5" stroke="#404040" stroke-width="1.5" fill="none"/><path d="M995.4 691.5 L1000 696 L995.4 700.5" stroke="#404040" stroke-width="1.5" fill="none"/></svg><div class="abs" style="left:711px;top:525px;width:292px;height:22.4px;background:#cce4f7;border:1px solid #9fd0f5"></div><svg style="left:704px;top:282px" width="306" height="403.4" viewBox="704 282 306 403.4" overflow="hidden"><g><path d="M715.3 311.6 L725.6 311.6 L729.2 315.0 L729.2 328.8 L715.3 328.8 Z" fill="#fcfcfc" stroke="#9a9a9a" stroke-width=".8"/><path d="M718 314.2 L724.5 314.2 M718 316.4 L726 316.4" stroke="#9a9a9a" stroke-width=".7"/><rect x="713.8" y="317.8" width="16.4" height="8.2" rx=".8" fill="#c8202a"/><path d="M715.3 335.6 L725.6 335.6 L729.2 339.0 L729.2 352.8 L715.3 352.8 Z" fill="#fcfcfc" stroke="#9a9a9a" stroke-width=".8"/><path d="M718 338.2 L724.5 338.2 M718 340.4 L726 340.4" stroke="#9a9a9a" stroke-width=".7"/><rect x="713.8" y="341.8" width="16.4" height="8.2" rx=".8" fill="#c8202a"/><path d="M715.3 359.6 L725.6 359.6 L729.2 363.0 L729.2 376.8 L715.3 376.8 Z" fill="#fcfcfc" stroke="#9a9a9a" stroke-width=".8"/><path d="M718 362.2 L724.5 362.2 M718 364.4 L726 364.4" stroke="#9a9a9a" stroke-width=".7"/><rect x="713.8" y="365.8" width="16.4" height="8.2" rx=".8" fill="#c8202a"/><path d="M715.3 383.6 L725.6 383.6 L729.2 387.0 L729.2 400.8 L715.3 400.8 Z" fill="#fcfcfc" stroke="#9a9a9a" stroke-width=".8"/><path d="M718 386.2 L724.5 386.2 M718 388.4 L726 388.4" stroke="#9a9a9a" stroke-width=".7"/><rect x="713.8" y="389.8" width="16.4" height="8.2" rx=".8" fill="#c8202a"/><path d="M715.3 407.6 L725.6 407.6 L729.2 411.0 L729.2 424.8 L715.3 424.8 Z" fill="#fcfcfc" stroke="#9a9a9a" stroke-width=".8"/><path d="M718 410.2 L724.5 410.2 M718 412.4 L726 412.4" stroke="#9a9a9a" stroke-width=".7"/><rect x="713.8" y="413.8" width="16.4" height="8.2" rx=".8" fill="#c8202a"/><path d="M715.3 431.6 L725.6 431.6 L729.2 435.0 L729.2 448.8 L715.3 448.8 Z" fill="#fcfcfc" stroke="#9a9a9a" stroke-width=".8"/><path d="M718 434.2 L724.5 434.2 M718 436.4 L726 436.4" stroke="#9a9a9a" stroke-width=".7"/><rect x="713.8" y="437.8" width="16.4" height="8.2" rx=".8" fill="#c8202a"/><path d="M715.3 455.6 L725.6 455.6 L729.2 459.0 L729.2 472.8 L715.3 472.8 Z" fill="#fcfcfc" stroke="#9a9a9a" stroke-width=".8"/><path d="M718 458.2 L724.5 458.2 M718 460.4 L726 460.4" stroke="#9a9a9a" stroke-width=".7"/><rect x="713.8" y="461.8" width="16.4" height="8.2" rx=".8" fill="#c8202a"/><path d="M715.3 479.6 L725.6 479.6 L729.2 483.0 L729.2 496.8 L715.3 496.8 Z" fill="#fcfcfc" stroke="#9a9a9a" stroke-width=".8"/><path d="M718 482.2 L724.5 482.2 M718 484.4 L726 484.4" stroke="#9a9a9a" stroke-width=".7"/><rect x="713.8" y="485.8" width="16.4" height="8.2" rx=".8" fill="#c8202a"/><path d="M715.3 503.6 L725.6 503.6 L729.2 507.0 L729.2 520.8 L715.3 520.8 Z" fill="#fcfcfc" stroke="#9a9a9a" stroke-width=".8"/><path d="M718 506.2 L724.5 506.2 M718 508.4 L726 508.4" stroke="#9a9a9a" stroke-width=".7"/><rect x="713.8" y="509.8" width="16.4" height="8.2" rx=".8" fill="#c8202a"/><path d="M715.3 527.6 L725.6 527.6 L729.2 531.0 L729.2 544.8 L715.3 544.8 Z" fill="#fcfcfc" stroke="#9a9a9a" stroke-width=".8"/><path d="M718 530.2 L724.5 530.2 M718 532.4 L726 532.4" stroke="#9a9a9a" stroke-width=".7"/><rect x="713.8" y="533.8" width="16.4" height="8.2" rx=".8" fill="#c8202a"/><path d="M715.3 551.6 L725.6 551.6 L729.2 555.0 L729.2 568.8 L715.3 568.8 Z" fill="#fcfcfc" stroke="#9a9a9a" stroke-width=".8"/><path d="M718 554.2 L724.5 554.2 M718 556.4 L726 556.4" stroke="#9a9a9a" stroke-width=".7"/><rect x="713.8" y="557.8" width="16.4" height="8.2" rx=".8" fill="#c8202a"/><path d="M715.3 575.6 L725.6 575.6 L729.2 579.0 L729.2 592.8 L715.3 592.8 Z" fill="#fcfcfc" stroke="#9a9a9a" stroke-width=".8"/><path d="M718 578.2 L724.5 578.2 M718 580.4 L726 580.4" stroke="#9a9a9a" stroke-width=".7"/><rect x="713.8" y="581.8" width="16.4" height="8.2" rx=".8" fill="#c8202a"/><path d="M715.3 599.6 L725.6 599.6 L729.2 603.0 L729.2 616.8 L715.3 616.8 Z" fill="#fcfcfc" stroke="#9a9a9a" stroke-width=".8"/><path d="M718 602.2 L724.5 602.2 M718 604.4 L726 604.4" stroke="#9a9a9a" stroke-width=".7"/><rect x="713.8" y="605.8" width="16.4" height="8.2" rx=".8" fill="#c8202a"/><path d="M715.3 623.6 L725.6 623.6 L729.2 627.0 L729.2 640.8 L715.3 640.8 Z" fill="#fcfcfc" stroke="#9a9a9a" stroke-width=".8"/><path d="M718 626.2 L724.5 626.2 M718 628.4 L726 628.4" stroke="#9a9a9a" stroke-width=".7"/><rect x="713.8" y="629.8" width="16.4" height="8.2" rx=".8" fill="#c8202a"/><path d="M715.3 647.6 L725.6 647.6 L729.2 651.0 L729.2 664.8 L715.3 664.8 Z" fill="#fcfcfc" stroke="#9a9a9a" stroke-width=".8"/><path d="M718 650.2 L724.5 650.2 M718 652.4 L726 652.4" stroke="#9a9a9a" stroke-width=".7"/><rect x="713.8" y="653.8" width="16.4" height="8.2" rx=".8" fill="#c8202a"/><path d="M715.3 671.6 L725.6 671.6 L729.2 675.0 L729.2 688.8 L715.3 688.8 Z" fill="#fcfcfc" stroke="#9a9a9a" stroke-width=".8"/><path d="M718 674.2 L724.5 674.2 M718 676.4 L726 676.4" stroke="#9a9a9a" stroke-width=".7"/><rect x="713.8" y="677.8" width="16.4" height="8.2" rx=".8" fill="#c8202a"/></g></svg><div class="abs" style="left:706px;top:520px;width:302px;height:32px;border:5px solid #e0222e;z-index:5"></div><div class="abs" style="left:806px;top:746px;width:454px;height:24px;background:#fff;border:1px solid #7a7a7a"></div><div class="abs" style="left:806px;top:784px;width:454px;height:24px;background:#e2e2e2;border:1px solid #adadad"></div><svg style="left:1240px;top:746px" width="20" height="64" viewBox="1240 746 20 64"><path d="M1244.6 756 L1249.4 760.8 L1254.2 756" stroke="#444" stroke-width="1.1" fill="none"/><path d="M1244.6 794 L1249.4 798.8 L1254.2 794" stroke="#444" stroke-width="1.1" fill="none"/></svg><div class="abs" style="left:1263.5px;top:741px;width:109.5px;height:34px;border:4.5px solid #e0222e"></div><div class="abs" style="left:1268px;top:745.5px;width:86px;height:25px;background:#e5f1fb;border:1px solid #0078d7"></div><div class="abs" style="left:1353.5px;top:745.5px;width:15px;height:25px;background:#e5f1fb;border-left:1px solid #0078d7;border-top:1px solid #0078d7;border-bottom:1px solid #0078d7"></div><svg style="left:1290px;top:750px" width="82" height="18" viewBox="1290 750 82 18"><rect x="1292" y="764" width="9.6" height="1" fill="#000"/><path d="M1359.4 755 L1368.6 755 L1364 760 Z" fill="#000"/></svg><div class="abs" style="left:1265px;top:783.5px;width:110px;height:25px;background:#e1e1e1;border:1px solid #adadad"></div><div class="abs" style="left:1040.6px;top:294.4px;width:337px;height:232.4px;border:1px solid #dcdcdc"></div><div class="abs" style="left:1046px;top:288px;width:54px;height:14px;background:#f0f0f0"></div><svg style="left:1054px;top:303.5px" width="311" height="219.5" viewBox="1054 303.5 311 219.5"><rect x="1054.5" y="304" width="309.5" height="218.4" fill="#fff" stroke="#3c3c3c" stroke-width="1"/><rect x="1057.8" y="307.2" width="261" height="211.8" fill="none" stroke="#4a4a4a" stroke-width=".9"/><rect x="1322.4" y="307.2" width="37.4" height="23.0" fill="none" stroke="#4a4a4a" stroke-width=".9"/><rect x="1322.4" y="334.2" width="37.4" height="90.2" fill="none" stroke="#4a4a4a" stroke-width=".9"/><rect x="1322.4" y="428.4" width="37.4" height="11.2" fill="none" stroke="#4a4a4a" stroke-width=".9"/><rect x="1322.4" y="443" width="37.4" height="7.2" fill="none" stroke="#4a4a4a" stroke-width=".9"/><rect x="1322.4" y="454" width="37.4" height="11.3" fill="none" stroke="#a0a0a0" stroke-width=".9"/><rect x="1322.4" y="468.6" width="37.4" height="49.2" fill="none" stroke="#4a4a4a" stroke-width=".9"/><path d="M1338 310.4 L1348 310.4 L1348 314 L1354.6 314 L1343 320.6 L1331.4 314 L1338 314 Z" fill="none" stroke="#333" stroke-width=".9"/><rect x="1197.4" y="429.7" width="84.4" height="53.3" fill="none" stroke="#555" stroke-width=".8"/><path d="M1109 338.2 L1165.6 338.2 L1165.6 346 L1233.9 346 L1233.9 463.3 L1116 463.3 L1116 414.7 L1109 414.7 Z" fill="#fff" stroke="#0a0a0a" stroke-width="1.7"/><path d="M1165.6 346 L1165.6 463.3 M1116 414.7 L1233.9 414.7" stroke="#0a0a0a" stroke-width="1.5" fill="none"/><g stroke="#222" fill="none" stroke-width=".8"><path d="M1120 338.2 L1120 346 M1131 338.2 L1131 352.5 M1142 338.2 L1142 349 M1149.7 338.2 L1149.7 360 L1165.6 360 M1120 352.5 L1137 352.5 M1137 344 L1137 352.5 M1131 344 L1137 344 M1109 362.5 L1128 362.5 M1128 362.5 L1128 376.5 L1109 376.5 M1142 355 L1142 384.5 L1165.6 384.5 M1146 366.5 L1146 360 M1109 396.6 L1127.4 396.6 M1150 389 L1150 414.7 M1146.6 392 L1146.6 414.7 M1155 384.5 L1155 395 L1165.6 395"/><rect x="1155" y="347.9" width="8.7" height="8.5"/><rect x="1157" y="349.6" width="6.7" height="5"/><rect x="1122.5" y="340" width="6" height="9"/><rect x="1133" y="339.8" width="3.4" height="3.4"/><rect x="1143.5" y="340" width="4.6" height="5"/><rect x="1160" y="339.6" width="4" height="4" fill="#999"/><rect x="1111" y="366" width="7" height="7"/><rect x="1112.5" y="381" width="3.6" height="9"/><rect x="1129.5" y="359.5" width="7" height="8.5" fill="#777" stroke="#222"/><rect x="1131" y="361" width="4" height="5" fill="#bbb" stroke="none"/><rect x="1123.3" y="371.4" width="2" height="2.6" stroke-width=".5"/><rect x="1125.7" y="371.4" width="2" height="2.6" stroke-width=".5"/><rect x="1128.1" y="371.4" width="2" height="2.6" stroke-width=".5"/><rect x="1130.5" y="371.4" width="2" height="2.6" stroke-width=".5"/><rect x="1132.9" y="371.4" width="2" height="2.6" stroke-width=".5"/><rect x="1135.3" y="371.4" width="2" height="2.6" stroke-width=".5"/><rect x="1121.0" y="390.6" width="2.2" height="2.8" stroke-width=".5"/><rect x="1123.7" y="390.6" width="2.2" height="2.8" stroke-width=".5"/><rect x="1126.4" y="390.6" width="2.2" height="2.8" stroke-width=".5"/><rect x="1129.1" y="390.6" width="2.2" height="2.8" stroke-width=".5"/><rect x="1131.8" y="390.6" width="2.2" height="2.8" stroke-width=".5"/><rect x="1134.5" y="390.6" width="2.2" height="2.8" stroke-width=".5"/><rect x="1137.2" y="390.6" width="2.2" height="2.8" stroke-width=".5"/><rect x="1139.9" y="390.6" width="2.2" height="2.8" stroke-width=".5"/><rect x="1147.4" y="362" width="2.1" height="2.8" stroke-width=".5"/><rect x="1149.9" y="362" width="2.1" height="2.8" stroke-width=".5"/><rect x="1152.4" y="362" width="2.1" height="2.8" stroke-width=".5"/><rect x="1154.9" y="362" width="2.1" height="2.8" stroke-width=".5"/><rect x="1157.4" y="362" width="2.1" height="2.8" stroke-width=".5"/><rect x="1160.6" y="365.4" width="2.8" height="2.1" stroke-width=".5"/><rect x="1160.6" y="368.0" width="2.8" height="2.1" stroke-width=".5"/><rect x="1160.6" y="370.6" width="2.8" height="2.1" stroke-width=".5"/><rect x="1160.6" y="373.2" width="2.8" height="2.1" stroke-width=".5"/><rect x="1114" y="369" width="2.6" height="9" stroke-width=".5"/><rect x="1117.4" y="369" width="2" height="9" stroke-width=".5"/><ellipse cx="1134.2" cy="405" rx="3.4" ry="8"/><rect x="1130" y="396.8" width="8.4" height="16.4" stroke="#999" stroke-width=".5"/><rect x="1150.6" y="393" width="3" height="19" fill="#444"/><rect x="1151" y="399" width="9" height="3" fill="#333"/><path d="M1153 395 Q1160 399 1154 412" stroke="#000" stroke-width="1.2"/><rect x="1146.8" y="402" width="2.6" height="11" fill="#aaa"/><rect x="1162" y="396" width="2.6" height="17" fill="#888" stroke-width=".4"/></g><g stroke="#000" fill="none" stroke-width="2.1"><path d="M1111 354 L1130.5 354 M1109 348 L1115 348 M1140.5 346 L1140.5 352 M1138 358 L1146 358 M1149.7 352 L1149.7 360 L1152.5 360 M1146 366.5 L1153 366.5 M1165.6 376 L1165.6 392 M1128 356 L1128 362.5"/><rect x="1110.4" y="397.6" width="16" height="16" stroke-width="2.6"/></g><rect x="1120.2" y="399.2" width="5.4" height="6" fill="#fff" stroke="#222" stroke-width=".8"/><rect x="1113" y="402" width="2" height="9" fill="#000"/><path d="M1124.0 384.5 L1127.1 382.6 L1128.8 384.1 L1132.8 381.6" fill="none" stroke="#000" stroke-width="1.4"/><path d="M1148.0 372.5 L1150.7 370.6 L1152.3 372.0 L1155.8 369.6" fill="none" stroke="#000" stroke-width="1.4"/><g stroke="#222" fill="none" stroke-width=".8"><rect x="1174.3" y="351" width="3.4" height="15.5" fill="#666"/><path d="M1176 366.5 L1176 373.5" stroke-width="1"/><rect x="1183" y="351" width="3.2" height="15.5" fill="#ccc"/><ellipse cx="1193.2" cy="358.4" rx="3.6" ry="9.3"/><path d="M1169 350 L1170.2 354 L1168.8 357 L1170.5 362" stroke="#000" stroke-width="1.3"/><path d="M1179.5 354 L1180.6 358 L1179.4 361 L1180.8 365" stroke="#000" stroke-width="1.2"/><rect x="1184.7" y="369.6" width="19.3" height="12.4"/><path d="M1184.7 379.6 L1204 379.6 M1184.7 381 L1204 381" stroke-width=".5"/><circle cx="1194.8" cy="375" r="4.2" fill="#8a8a8a" stroke="#666"/><path d="M1191.6 373 L1197.6 377.4" stroke="#ccc" stroke-width=".8"/><rect x="1184.7" y="383.6" width="22.5" height="10.1" stroke="#000" stroke-width="1.2"/><rect x="1186.6" y="389.6" width="8" height="3.6"/><path d="M1198 384.6 L1202 384.6 M1200 384.6 L1200 389" stroke="#000" stroke-width="1"/><path d="M1210.3 376.6 L1233.9 376.6 M1218 378 L1218 393.7 L1233.9 393.7 M1210.3 376.6 L1210.3 381"/><rect x="1210.6" y="377.4" width="6" height="2.2" fill="#777"/><rect x="1215.4" y="379" width="2" height="12" fill="#333"/><path d="M1226 382.4 L1226 393 M1226 382.4 L1229.6 382.4 L1229.6 389 L1233 389" stroke-width=".9"/><path d="M1207.2 391 L1212 394.6 L1219.5 392.4" stroke-width=".9"/><path d="M1166 395.2 L1204 395.2 L1204 414.7 M1174.6 395.2 L1174.6 414.7 M1172 395.2 L1172 414.7"/><path d="M1204 395.2 L1204 414.7" stroke="#000" stroke-width="1.6"/><rect x="1205.6" y="398.4" width="5.6" height="2.6" fill="#111"/><path d="M1205 403 L1205 412 M1207.6 404 L1207.6 410" stroke-width="1"/><rect x="1206.6" y="406" width="4.6" height="5"/><circle cx="1214.5" cy="411" r="1.7" fill="#555"/><rect x="1222.6" y="406.6" width="7" height="7.4"/><path d="M1216 397 L1233 397.6" stroke-width=".6"/><path d="M1224 400.4 L1229 400" stroke-width=".9"/></g><path d="M1211.7 348.5 Q1203.6 349.0 1203.6 359.5 Q1203.6 370.0 1210.2 370.5 L1212.6 370.5" fill="none" stroke="#0a0a0a" stroke-width="2.9"/><path d="M1211.7 351.1 Q1206.4 351.5 1206.4 359.5 Q1206.4 367.5 1211.2 368.1" fill="none" stroke="#fff" stroke-width=".7"/><path d="M1220.7 348.5 Q1228.8 349.0 1228.8 359.5 Q1228.8 370.0 1222.2 370.5 L1219.8 370.5" fill="none" stroke="#0a0a0a" stroke-width="2.9"/><path d="M1220.7 351.1 Q1226.0 351.5 1226.0 359.5 Q1226.0 367.5 1221.2 368.1" fill="none" stroke="#fff" stroke-width=".7"/><rect x="1212.8" y="357.9" width="6.8" height="5.2" fill="#fff" stroke="#0a0a0a" stroke-width="1.3"/><rect x="1214.2" y="359.1" width="4" height="2.8" fill="#ddd" stroke="#555" stroke-width=".5"/><path d="M1212.2 355.3 L1215.2 353.5 L1216.7 354.9 L1220.2 353.1" fill="none" stroke="#000" stroke-width="1.3"/><g stroke="#000" fill="none" stroke-width="2"><path d="M1172 388.6 L1184.7 388.6 M1184.7 383.6 L1184.7 393.7 M1204 369 L1204 376 M1165.6 384 L1170 384 M1171.5 384 L1171.5 388.6"/></g><path d="M1174.0 381.6 L1176.1 380.2 L1177.3 381.9 L1180.0 380.0" fill="none" stroke="#000" stroke-width="1.4"/><g stroke="#222" fill="none" stroke-width=".8"><rect x="1117" y="417.8" width="25" height="14.7"/><rect x="1123" y="419.6" width="16" height="12" stroke="#999" stroke-width=".5"/><ellipse cx="1131" cy="426.6" rx="8.6" ry="3.3"/><ellipse cx="1131" cy="426.6" rx="7.2" ry="2.2" stroke-width=".4"/><rect x="1121" y="415.6" width="17" height="2.4" fill="#333"/><path d="M1116 432.5 L1146.6 432.5 M1146.6 414.7 L1146.6 463.3 M1152 431 L1165.6 431 M1152 445.6 L1165.6 445.6 M1147 437 L1152 437 L1152 463.3"/><rect x="1148.2" y="420" width="2.6" height="11" fill="#444"/><rect x="1158" y="419" width="3" height="11" fill="#222"/><rect x="1161.6" y="420" width="2" height="9" fill="#999"/><path d="M1153 417.6 L1160 417" stroke="#000" stroke-width="1.2"/><rect x="1156.6" y="432.4" width="3.2" height="12" fill="#222"/><rect x="1160.6" y="434" width="2" height="6" fill="#888"/><rect x="1149" y="433" width="2.4" height="10"/><path d="M1153.5 432 L1153.5 444" stroke="#000" stroke-width="1.1"/><rect x="1156.6" y="447" width="3" height="12" fill="#111"/><rect x="1148.4" y="446" width="2.4" height="14"/><rect x="1161" y="448" width="2" height="12" fill="#999" stroke-width=".4"/><path d="M1184.7 414.7 L1184.7 463.3" stroke="#000" stroke-width="1.3"/><path d="M1165.6 445 L1184.7 445"/><rect x="1176" y="449.6" width="8.7" height="11.7" fill="#1a1a1a"/><path d="M1178 449.6 L1178 461.3 M1180 449.6 L1180 461.3 M1182 449.6 L1182 461.3" stroke="#fff" stroke-width=".5"/><rect x="1166.4" y="456.8" width="3.6" height="5.2" stroke="#000" stroke-width="1.3"/><rect x="1170.8" y="456.8" width="3.6" height="5.2" stroke="#000" stroke-width="1.3"/><path d="M1165.6 455.4 L1176 455.4" stroke="#000" stroke-width="1.2"/><path d="M1184.7 438.4 L1200.4 438.4 M1200.4 438.4 L1200.4 463.3 M1185.4 438.4 L1185.4 463.3 M1186.6 438.4 L1186.6 463.3 M1187.8 438.4 L1187.8 463.3" stroke-width=".7"/><rect x="1189" y="439.2" width="10.6" height="22" stroke="#777" stroke-width=".5"/><ellipse cx="1193.8" cy="449.6" rx="3.4" ry="8.4"/><path d="M1184.7 424.4 L1196 424.4 M1196 416 L1196 424.4 M1200 417 L1200 428 M1200 424.6 L1233.9 424.6" stroke-width=".8"/><rect x="1190" y="428.6" width="10.4" height="4.8" fill="#222"/><path d="M1191 430 L1200 430 M1191 431.6 L1200 431.6" stroke="#888" stroke-width=".4"/><rect x="1201" y="425.4" width="13.2" height="3.2" fill="#888"/><rect x="1200.6" y="429" width="11" height="2" fill="#333"/><rect x="1219" y="425.6" width="12.6" height="3.2" fill="#aaa"/><rect x="1214" y="430.6" width="18" height="3.2"/><path d="M1215 436 L1221 436 M1225 436 L1232 436" stroke-width=".6"/><rect x="1186" y="416" width="2.6" height="3.4"/><rect x="1190" y="416" width="3" height="2.6" fill="#555"/><rect x="1194" y="415.6" width="5" height="3" fill="#333"/><rect x="1209" y="415.4" width="14" height="1.6" fill="#ddd" stroke-width=".4"/><rect x="1231" y="417" width="2" height="8" fill="#bbb" stroke-width=".4"/></g><path d="M1127.3 436.3 Q1119.0 436.8 1119.0 447.3 Q1119.0 457.8 1125.8 458.3 L1128.2 458.3" fill="none" stroke="#0a0a0a" stroke-width="2.9"/><path d="M1127.3 438.9 Q1121.8 439.3 1121.8 447.3 Q1121.8 455.3 1126.8 455.9" fill="none" stroke="#fff" stroke-width=".7"/><path d="M1136.3 436.3 Q1144.6 436.8 1144.6 447.3 Q1144.6 457.8 1137.8 458.3 L1135.4 458.3" fill="none" stroke="#0a0a0a" stroke-width="2.9"/><path d="M1136.3 438.9 Q1141.8 439.3 1141.8 447.3 Q1141.8 455.3 1136.8 455.9" fill="none" stroke="#fff" stroke-width=".7"/><rect x="1128.4" y="445.7" width="6.8" height="5.2" fill="#fff" stroke="#0a0a0a" stroke-width="1.3"/><rect x="1129.8" y="446.9" width="4" height="2.8" fill="#ddd" stroke="#555" stroke-width=".5"/><path d="M1127.8 443.1 L1130.8 441.3 L1132.3 442.7 L1135.8 440.9" fill="none" stroke="#000" stroke-width="1.3"/><path d="M1213.1 438.4 Q1205.6 438.9 1205.6 448.8 Q1205.6 458.7 1211.6 459.2 L1214.0 459.2" fill="none" stroke="#0a0a0a" stroke-width="2.9"/><path d="M1213.1 441.0 Q1208.4 441.4 1208.4 448.8 Q1208.4 456.2 1212.6 456.8" fill="none" stroke="#fff" stroke-width=".7"/><path d="M1222.1 438.4 Q1229.6 438.9 1229.6 448.8 Q1229.6 458.7 1223.6 459.2 L1221.2 459.2" fill="none" stroke="#0a0a0a" stroke-width="2.9"/><path d="M1222.1 441.0 Q1226.8 441.4 1226.8 448.8 Q1226.8 456.2 1222.6 456.8" fill="none" stroke="#fff" stroke-width=".7"/><rect x="1214.2" y="447.2" width="6.8" height="5.2" fill="#fff" stroke="#0a0a0a" stroke-width="1.3"/><rect x="1215.6" y="448.4" width="4" height="2.8" fill="#ddd" stroke="#555" stroke-width=".5"/><path d="M1213.6 444.6 L1216.6 442.8 L1218.1 444.2 L1221.6 442.4" fill="none" stroke="#000" stroke-width="1.3"/><path d="M1209.0 420.2 L1212.1 418.6 L1213.9 420.1 L1217.9 417.9" fill="none" stroke="#000" stroke-width="1.4"/><path d="M1188.0 427.0 L1189.4 425.7 L1190.2 427.4 L1192.0 425.6" fill="none" stroke="#000" stroke-width="1.4"/><path d="M1155.0 436.5 L1155.3 433.6 L1155.5 434.4 L1155.9 430.6" fill="none" stroke="#000" stroke-width="1.4"/><path d="M1155.0 451.5 L1155.3 448.6 L1155.5 449.4 L1155.9 445.6" fill="none" stroke="#000" stroke-width="1.4"/><rect x="1117" y="461" width="2.6" height="2" fill="#555"/><rect x="1144.6" y="461" width="2.6" height="2" fill="#555"/><rect x="1204.6" y="461" width="2.6" height="2" fill="#555"/><rect x="1230.6" y="461" width="2.6" height="2" fill="#555"/><rect x="1109.6" y="412.4" width="2.6" height="2" fill="#555"/><rect x="1231" y="347" width="2.6" height="2" fill="#555"/><rect x="1166.4" y="347" width="2.6" height="2" fill="#555"/></svg><div class="t" style="left:566.4px;top:212px;font-size:15px;letter-spacing:-0.45px;transform:scaleX(0.9882);transform-origin:0 0;color:#000;">Select PDF File</div>
<div class="t" style="left:642.2px;top:251px;font-size:14px;letter-spacing:-0.43px;color:#111;">Look in:</div>
<div class="t" style="left:733.3px;top:252px;font-size:14.6px;letter-spacing:-0.45px;transform:scaleX(0.9821);transform-origin:0 0;color:#000;">New folder</div>
<div class="t" style="left:1225.0px;top:251px;font-size:13.6px;letter-spacing:-0.14px;color:#000;">Views</div>
<div class="t" style="left:1306.0px;top:251px;font-size:13.6px;letter-spacing:0.29px;color:#000;">Tools</div>
<div class="t" style="left:592.5px;top:341px;font-size:13.4px;letter-spacing:-0.14px;color:#fff;">History</div>
<div class="t" style="left:579.4px;top:416px;font-size:13.4px;letter-spacing:-0.07px;color:#fff;">Documents</div>
<div class="t" style="left:587.6px;top:491px;font-size:13.4px;letter-spacing:0.10px;color:#fff;">Desktop</div>
<div class="t" style="left:584.3px;top:566px;font-size:13.4px;letter-spacing:-0.03px;color:#fff;">OneDrive</div>
<div class="t" style="left:710.5px;top:288px;font-size:15px;letter-spacing:-0.23px;color:#1a1a1a;">Name</div>
<div class="t" style="left:910.6px;top:288px;font-size:15px;letter-spacing:0.26px;color:#1a1a1a;">Date modified</div>
<div class="t" style="left:715.2px;top:320px;font-size:6.6px;letter-spacing:0.20px;color:#fff;font-weight:bold;">PDF</div>
<div class="t" style="left:734.5px;top:313px;font-size:15.4px;letter-spacing:-0.45px;transform:scaleX(0.9245);transform-origin:0 0;color:#111;">21</div>
<div class="t" style="left:911.0px;top:313px;font-size:15.4px;letter-spacing:-0.41px;color:#111;overflow:hidden;">7/22/2021 1:36</div>
<div class="t" style="left:715.2px;top:344px;font-size:6.6px;letter-spacing:0.20px;color:#fff;font-weight:bold;">PDF</div>
<div class="t" style="left:734.5px;top:337px;font-size:15.4px;letter-spacing:-0.45px;transform:scaleX(0.9245);transform-origin:0 0;color:#111;">22</div>
<div class="t" style="left:911.0px;top:337px;font-size:15.4px;letter-spacing:-0.41px;color:#111;overflow:hidden;">7/22/2021 1:31</div>
<div class="t" style="left:715.2px;top:368px;font-size:6.6px;letter-spacing:0.20px;color:#fff;font-weight:bold;">PDF</div>
<div class="t" style="left:734.5px;top:361px;font-size:15.4px;letter-spacing:-0.45px;transform:scaleX(0.9245);transform-origin:0 0;color:#111;">23</div>
<div class="t" style="left:911.0px;top:361px;font-size:15.4px;letter-spacing:-0.41px;color:#111;overflow:hidden;">7/22/2021 1:32</div>
<div class="t" style="left:715.2px;top:392px;font-size:6.6px;letter-spacing:0.20px;color:#fff;font-weight:bold;">PDF</div>
<div class="t" style="left:734.5px;top:385px;font-size:15.4px;letter-spacing:-0.45px;transform:scaleX(0.9245);transform-origin:0 0;color:#111;">24</div>
<div class="t" style="left:911.0px;top:385px;font-size:15.4px;letter-spacing:-0.41px;color:#111;overflow:hidden;">7/22/2021 1:36</div>
<div class="t" style="left:715.2px;top:416px;font-size:6.6px;letter-spacing:0.20px;color:#fff;font-weight:bold;">PDF</div>
<div class="t" style="left:734.5px;top:409px;font-size:15.4px;letter-spacing:-0.45px;transform:scaleX(0.9245);transform-origin:0 0;color:#111;">25</div>
<div class="t" style="left:911.0px;top:409px;font-size:15.4px;letter-spacing:-0.41px;color:#111;overflow:hidden;">7/22/2021 1:36</div>
<div class="t" style="left:715.2px;top:440px;font-size:6.6px;letter-spacing:0.20px;color:#fff;font-weight:bold;">PDF</div>
<div class="t" style="left:734.5px;top:433px;font-size:15.4px;letter-spacing:-0.45px;transform:scaleX(0.9245);transform-origin:0 0;color:#111;">26</div>
<div class="t" style="left:911.0px;top:433px;font-size:15.4px;letter-spacing:-0.41px;color:#111;overflow:hidden;">7/22/2021 1:38</div>
<div class="t" style="left:715.2px;top:464px;font-size:6.6px;letter-spacing:0.20px;color:#fff;font-weight:bold;">PDF</div>
<div class="t" style="left:734.5px;top:457px;font-size:15.4px;letter-spacing:-0.45px;transform:scaleX(0.9245);transform-origin:0 0;color:#111;">27</div>
<div class="t" style="left:911.0px;top:457px;font-size:15.4px;letter-spacing:-0.41px;color:#111;overflow:hidden;">7/22/2021 1:39</div>
<div class="t" style="left:715.2px;top:488px;font-size:6.6px;letter-spacing:0.20px;color:#fff;font-weight:bold;">PDF</div>
<div class="t" style="left:734.5px;top:481px;font-size:15.4px;letter-spacing:-0.45px;transform:scaleX(0.9245);transform-origin:0 0;color:#111;">28</div>
<div class="t" style="left:911.0px;top:481px;font-size:15.4px;letter-spacing:-0.41px;color:#111;overflow:hidden;">7/22/2021 1:39</div>
<div class="t" style="left:715.2px;top:512px;font-size:6.6px;letter-spacing:0.20px;color:#fff;font-weight:bold;">PDF</div>
<div class="t" style="left:734.5px;top:505px;font-size:15.4px;letter-spacing:-0.45px;transform:scaleX(0.9245);transform-origin:0 0;color:#111;">29</div>
<div class="t" style="left:911.0px;top:505px;font-size:15.4px;letter-spacing:-0.41px;color:#111;overflow:hidden;">7/22/2021 1:39</div>
<div class="t" style="left:715.2px;top:536px;font-size:6.6px;letter-spacing:0.20px;color:#fff;font-weight:bold;">PDF</div>
<div class="t" style="left:734.5px;top:529px;font-size:15.4px;letter-spacing:-0.45px;transform:scaleX(0.9245);transform-origin:0 0;color:#111;">30</div>
<div class="t" style="left:911.0px;top:529px;font-size:15.4px;letter-spacing:-0.41px;color:#111;clip-path:inset(0 4.6px 0 0);overflow:hidden;">7/22/2021 1:40</div>
<div class="t" style="left:715.2px;top:560px;font-size:6.6px;letter-spacing:0.20px;color:#fff;font-weight:bold;">PDF</div>
<div class="t" style="left:734.5px;top:553px;font-size:15.4px;letter-spacing:-0.45px;transform:scaleX(0.9245);transform-origin:0 0;color:#111;">31</div>
<div class="t" style="left:911.0px;top:553px;font-size:15.4px;letter-spacing:-0.41px;color:#111;overflow:hidden;">7/22/2021 1:41</div>
<div class="t" style="left:715.2px;top:584px;font-size:6.6px;letter-spacing:0.20px;color:#fff;font-weight:bold;">PDF</div>
<div class="t" style="left:734.5px;top:577px;font-size:15.4px;letter-spacing:-0.45px;transform:scaleX(0.9245);transform-origin:0 0;color:#111;">32</div>
<div class="t" style="left:911.0px;top:577px;font-size:15.4px;letter-spacing:-0.41px;color:#111;overflow:hidden;">7/22/2021 1:42</div>
<div class="t" style="left:715.2px;top:608px;font-size:6.6px;letter-spacing:0.20px;color:#fff;font-weight:bold;">PDF</div>
<div class="t" style="left:734.5px;top:601px;font-size:15.4px;letter-spacing:-0.45px;transform:scaleX(0.9245);transform-origin:0 0;color:#111;">33</div>
<div class="t" style="left:911.0px;top:601px;font-size:15.4px;letter-spacing:-0.41px;color:#111;overflow:hidden;">7/22/2021 1:42</div>
<div class="t" style="left:715.2px;top:632px;font-size:6.6px;letter-spacing:0.20px;color:#fff;font-weight:bold;">PDF</div>
<div class="t" style="left:734.5px;top:625px;font-size:15.4px;letter-spacing:-0.45px;transform:scaleX(0.9245);transform-origin:0 0;color:#111;">34</div>
<div class="t" style="left:911.0px;top:625px;font-size:15.4px;letter-spacing:-0.41px;color:#111;overflow:hidden;">7/22/2021 1:44</div>
<div class="t" style="left:715.2px;top:656px;font-size:6.6px;letter-spacing:0.20px;color:#fff;font-weight:bold;">PDF</div>
<div class="t" style="left:734.5px;top:649px;font-size:15.4px;letter-spacing:-0.45px;transform:scaleX(0.9245);transform-origin:0 0;color:#111;">35</div>
<div class="t" style="left:911.0px;top:649px;font-size:15.4px;letter-spacing:-0.41px;color:#111;overflow:hidden;">7/22/2021 1:45</div>
<div class="t" style="left:715.2px;top:680px;font-size:6.6px;letter-spacing:0.20px;color:#fff;font-weight:bold;">PDF</div>
<div class="t" style="left:734.5px;top:673px;font-size:15.4px;letter-spacing:-0.45px;transform:scaleX(0.9245);transform-origin:0 0;color:#111;clip-path:inset(0 0 1.6px 0);">36</div>
<div class="t" style="left:911.0px;top:673px;font-size:15.4px;letter-spacing:-0.41px;color:#111;clip-path:inset(0 0 1.6px 0);overflow:hidden;">7/22/2021 1:44</div>
<div class="t" style="left:706.3px;top:748px;font-size:13.6px;letter-spacing:-0.23px;color:#111;">File name:</div>
<div class="t" style="left:706.3px;top:786px;font-size:13.6px;letter-spacing:-0.20px;color:#111;">Files of type:</div>
<div class="t" style="left:809.2px;top:751px;font-size:13.6px;letter-spacing:-0.86px;color:#000;">30</div>
<div class="t" style="left:809.8px;top:789px;font-size:13.6px;letter-spacing:-0.27px;color:#000;">PDF (*.pdf)</div>
<div class="t" style="left:1292.0px;top:751px;font-size:13.6px;color:#000;">Open</div>
<div class="t" style="left:1299.0px;top:790px;font-size:13.6px;letter-spacing:-0.10px;color:#000;">Cancel</div>
<div class="t" style="left:1049.2px;top:288px;font-size:13.6px;letter-spacing:-0.11px;color:#000;">Preview</div>
<div class="t" style="left:1330.2px;top:323px;font-size:6.6px;letter-spacing:0.33px;color:#555;">NORTH</div>
<div class="t" style="left:1325.2px;top:459px;font-size:6.4px;letter-spacing:-0.05px;color:#999;">SC:</div>
<div class="t" style="left:1337.5px;top:459px;font-size:4.2px;letter-spacing:-0.10px;color:#aaa;">1/100</div><div class="t" dir="rtl" style="left:1321.5px;width:35.5px;overflow:hidden;text-align:right;top:335.5px;font-size:7px;font-weight:700;color:#111;font-family:'DejaVu Sans',sans-serif">توضیحات</div><div class="t" dir="rtl" style="left:1323.0px;width:35.5px;overflow:hidden;text-align:right;top:430.5px;font-size:4.9px;font-weight:700;color:#111;font-family:'DejaVu Sans',sans-serif">پلان طبقه دوم</div><div class="t" dir="rtl" style="left:1323.0px;width:35.5px;overflow:hidden;text-align:right;top:443.8px;font-size:4.2px;font-weight:700;color:#111;font-family:'DejaVu Sans',sans-serif">شماره شیت ۳۰</div><div class="t" dir="rtl" style="left:1323.0px;width:35.5px;overflow:hidden;text-align:right;top:470.5px;font-size:4.4px;font-weight:700;color:#111;font-family:'DejaVu Sans',sans-serif">طراحی معماری ۵</div><div class="t" dir="rtl" style="left:1323.0px;width:35.5px;overflow:hidden;text-align:right;top:478.1px;font-size:4.4px;font-weight:700;color:#111;font-family:'DejaVu Sans',sans-serif">استاد راهنما:</div><div class="t" dir="rtl" style="left:1323.0px;width:35.5px;overflow:hidden;text-align:right;top:485.7px;font-size:4.4px;font-weight:700;color:#111;font-family:'DejaVu Sans',sans-serif">دکتر کشمیری</div><div class="t" dir="rtl" style="left:1323.0px;width:35.5px;overflow:hidden;text-align:right;top:493.3px;font-size:4px;font-weight:700;color:#111;font-family:'DejaVu Sans',sans-serif">دانشجویان:</div><div class="t" dir="rtl" style="left:1323.0px;width:35.5px;overflow:hidden;text-align:right;top:500.9px;font-size:4.4px;font-weight:700;color:#111;font-family:'DejaVu Sans',sans-serif">مهیا صادقی زاده</div><div class="t" dir="rtl" style="left:1323.0px;width:35.5px;overflow:hidden;text-align:right;top:508.5px;font-size:4.4px;font-weight:700;color:#111;font-family:'DejaVu Sans',sans-serif">فاخره جلالی</div>
</body>
</html>
